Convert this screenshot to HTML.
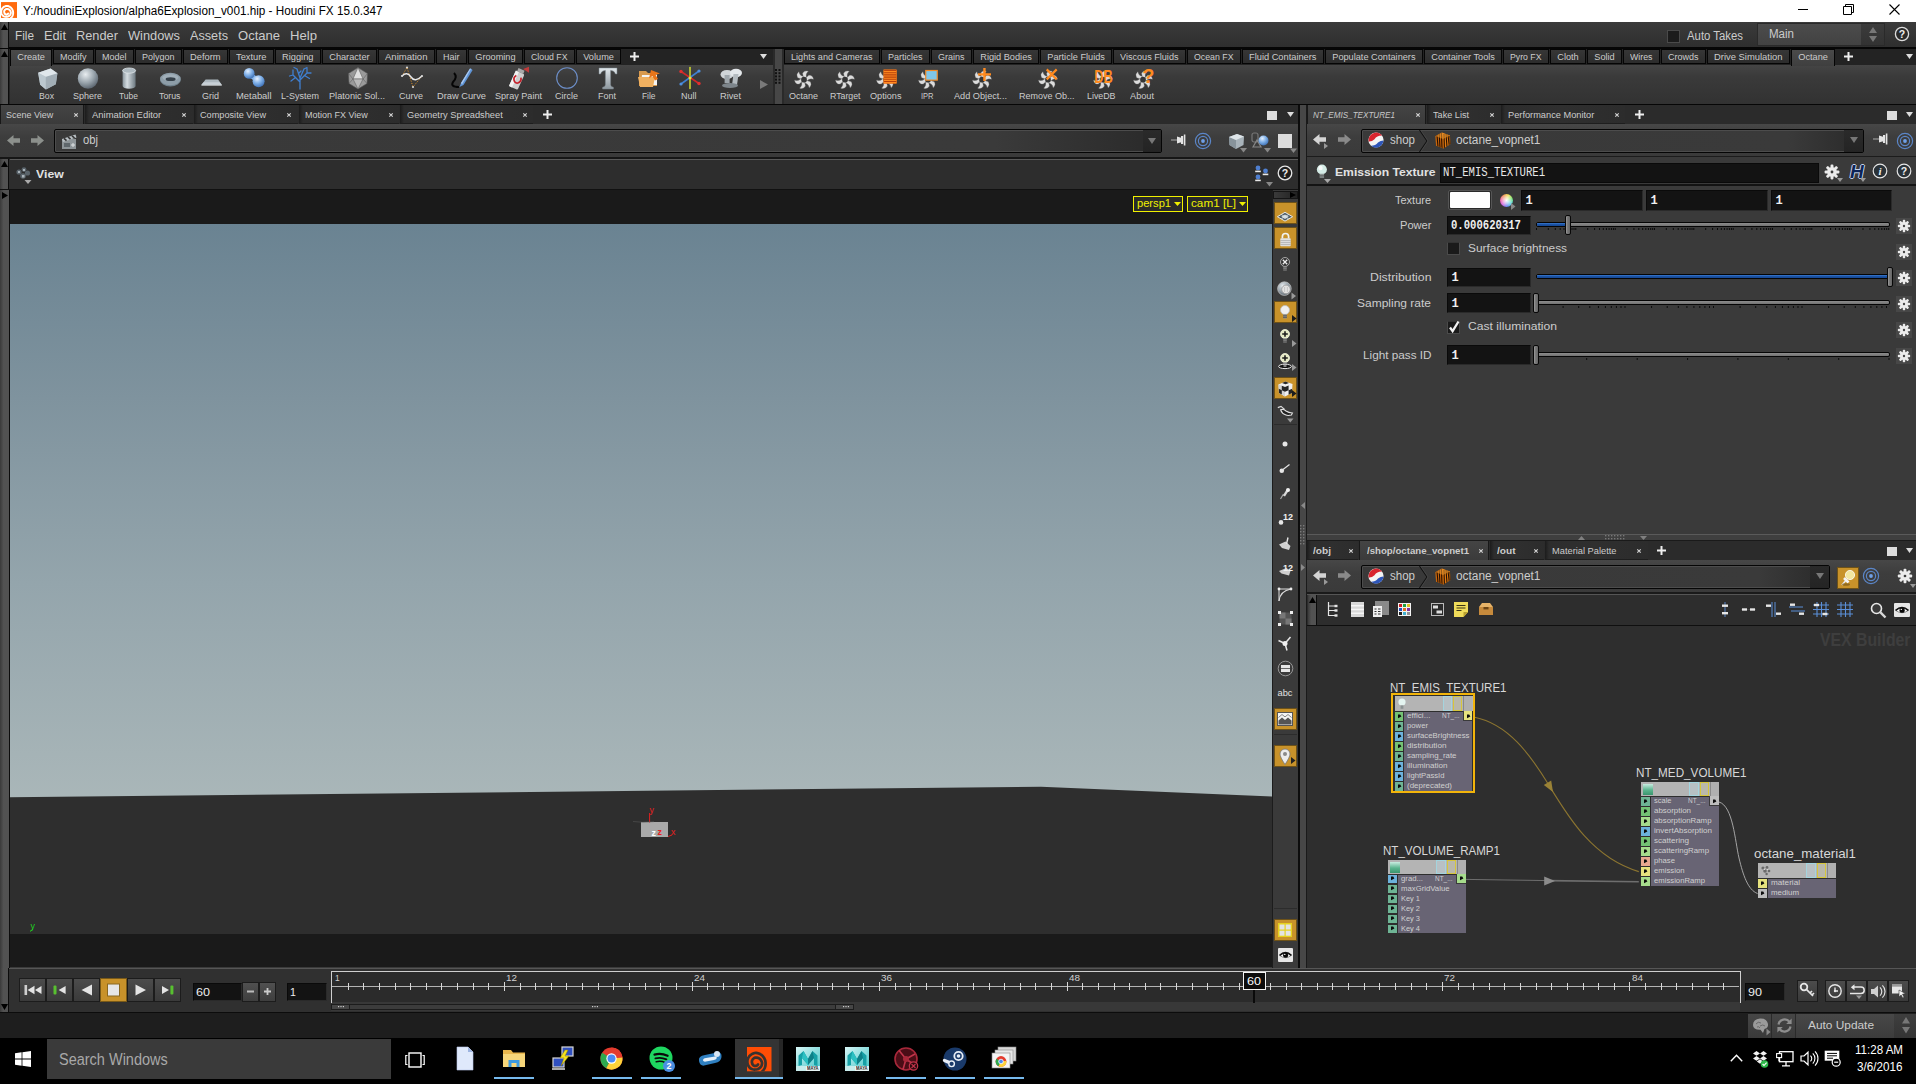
<!DOCTYPE html>
<html><head><meta charset="utf-8"><title>Houdini</title>
<style>
html,body{margin:0;padding:0;background:#3a3a3a;}
body{width:1916px;height:1084px;overflow:hidden;font-family:"Liberation Sans",sans-serif;}
#r{position:relative;width:1916px;height:1084px;overflow:hidden;background:#3a3a3a;}
#r div,#r span,#r svg{position:absolute;box-sizing:border-box;}
#r svg{overflow:visible;}
</style></head><body><div id="r">
<div style="left:0px;top:0px;width:1916px;height:22px;background:#ffffff;"></div>
<svg style="left:1px;top:2px;" width="16" height="16" viewBox="0 0 24.5 24.3"><defs><clipPath id="cpH2"><rect width="24.5" height="24.3"/></clipPath></defs><rect width="24.5" height="24.3" fill="#ff6a0d"/><path clip-path="url(#cpH2)" d="M15.2 24.5L16.3 23.4L17.1 22.1L17.8 20.8L18.3 19.4L18.5 18.0L18.6 16.6L18.5 15.1L18.3 13.7L17.8 12.3L17.2 11.1L16.4 9.9L15.5 8.8L14.4 7.9L13.1 7.1L11.8 6.5L10.4 6.1L9.0 5.9L7.6 6.0L6.2 6.5L5.0 7.0L3.8 7.8L2.8 8.7L2.0 9.7L1.3 10.7L0.8 11.9L0.5 13.0L0.4 14.2L0.4 15.4L0.5 16.5L0.8 17.5L1.2 18.5L1.7 19.4L2.3 20.2L3.0 21.0L3.8 21.5L4.7 22.0L5.6 22.3L6.5 22.5L7.4 22.6L8.3 22.5L9.2 22.5L10.1 22.3L10.9 22.1L11.7 21.7L12.5 21.2L13.2 20.6L13.8 19.9L14.3 19.1L14.7 18.3L14.9 17.4L15.1 16.4L15.0 15.5L14.7 14.6L14.3 13.8L13.8 13.0L13.3 12.3L12.6 11.7L11.9 11.3L11.1 10.9L10.3 10.7L9.5 10.6L8.7 10.6L7.9 10.7L7.2 11.0L6.6 11.5L6.0 11.9L5.6 12.5L5.3 13.1L5.0 13.6L4.9 14.2L4.9 14.8L4.9 15.4L5.1 15.9L5.2 16.3L5.3 16.7L5.4 17.1L5.6 17.5L5.9 17.8L6.1 18.1L6.5 18.4L6.8 18.6L7.2 18.8L7.5 18.9L7.9 18.9L8.3 18.9L8.7 18.9L9.1 18.9L9.4 18.8L9.8 18.6L10.1 18.4L10.5 18.1L10.7 17.8L11.0 17.5" fill="none" stroke="#ffffff" stroke-width="3" stroke-linejoin="round" stroke-linecap="round"/></svg>
<span style="left:22.50px;top:3.80px;font-size:12.3px;line-height:15px;color:#000;white-space:pre;transform-origin:0 50%;transform:scaleX(0.9527);">Y:/houdiniExplosion/alpha6Explosion_v001.hip - Houdini FX 15.0.347</span>
<svg style="left:1797px;top:4px;" width="12" height="12" viewBox="0 0 12 12"><path d="M1 5.5h10" stroke="#000" stroke-width="1"/></svg>
<svg style="left:1843px;top:4px;" width="11" height="11" viewBox="0 0 11 11"><path d="M0.5 2.5h8v8h-8z M2.5 2.5v-2h8v8h-2" fill="none" stroke="#000" stroke-width="1"/></svg>
<svg style="left:1889px;top:4px;" width="11" height="11" viewBox="0 0 11 11"><path d="M0.5 0.5l10 10M10.5 0.5l-10 10" stroke="#000" stroke-width="1.1"/></svg>
<div style="left:0px;top:22px;width:1916px;height:26px;background:linear-gradient(#3b3b3b,#2e2e2e);"></div>
<div style="left:0px;top:47px;width:1916px;height:2px;background:#060606;"></div>
<div style="left:0px;top:22px;width:9px;height:26px;background:linear-gradient(90deg,#3a3a3a,#525252 40%);border-right:1.5px solid #0c0c0c;"></div>
<svg style="left:1px;top:24px;" width="7" height="6" viewBox="0 0 7 6"><path d="M0 6L3.5 0L7 6z" fill="#000"/></svg>
<span style="left:15.00px;top:28.67px;font-size:12.57px;line-height:15px;color:#cccccc;white-space:pre;transform-origin:0 50%;transform:scaleX(0.9386);">File</span>
<span style="left:44.00px;top:28.67px;font-size:12.57px;line-height:15px;color:#cccccc;white-space:pre;transform-origin:0 50%;transform:scaleX(1.0163);">Edit</span>
<span style="left:76.00px;top:28.67px;font-size:12.57px;line-height:15px;color:#cccccc;white-space:pre;transform-origin:0 50%;transform:scaleX(1.0194);">Render</span>
<span style="left:128.00px;top:28.67px;font-size:12.57px;line-height:15px;color:#cccccc;white-space:pre;transform-origin:0 50%;transform:scaleX(1.0204);">Windows</span>
<span style="left:190.00px;top:28.67px;font-size:12.57px;line-height:15px;color:#cccccc;white-space:pre;transform-origin:0 50%;transform:scaleX(1.0080);">Assets</span>
<span style="left:238.00px;top:28.67px;font-size:12.57px;line-height:15px;color:#cccccc;white-space:pre;transform-origin:0 50%;transform:scaleX(1.0370);">Octane</span>
<span style="left:290.00px;top:28.67px;font-size:12.57px;line-height:15px;color:#cccccc;white-space:pre;transform-origin:0 50%;transform:scaleX(1.0450);">Help</span>
<div style="left:1667px;top:30px;width:13px;height:13px;background:#1c1c1c;border:1px solid #4a4a4a;"></div>
<span style="left:1687.00px;top:28.84px;font-size:12.04px;line-height:14px;color:#cccccc;white-space:pre;transform-origin:0 50%;transform:scaleX(0.9443);">Auto Takes</span>
<div style="left:1757px;top:23px;width:128px;height:23px;background:linear-gradient(#4c4c4c,#424242);border:1px solid #2a2a2a;"></div>
<div style="left:1861px;top:24px;width:23px;height:21px;background:linear-gradient(#3c3c3c,#323232);"></div>
<span style="left:1769.00px;top:26.94px;font-size:12.04px;line-height:14px;color:#cccccc;white-space:pre;transform-origin:0 50%;transform:scaleX(0.9587);">Main</span>
<svg style="left:1869px;top:27px;" width="8" height="16" viewBox="0 0 8 16"><path d="M0 6L4 0L8 6z M0 9L4 15L8 9z" fill="#777"/></svg>
<svg style="left:1894px;top:26px;" width="16" height="16" viewBox="0 0 16 16"><circle cx="8" cy="8" r="6.6" fill="#2a2a2a" stroke="#ddd" stroke-width="1.3"/><text x="8" y="12" font-size="10.5" font-weight="bold" fill="#eee" text-anchor="middle" font-family="Liberation Sans">?</text></svg>
<div style="left:0px;top:49px;width:1916px;height:56px;background:#232323;"></div>
<div style="left:0px;top:49px;width:9px;height:55px;background:linear-gradient(90deg,#3a3a3a,#525252 40%);border-right:1.5px solid #0c0c0c;"></div>
<svg style="left:1px;top:51px;" width="7" height="6" viewBox="0 0 7 6"><path d="M0 6L3.5 0L7 6z" fill="#000"/></svg>
<div style="left:10px;top:65px;width:763px;height:39px;background:linear-gradient(#454545,#3a3a3a 30%,#323232);"></div>
<div style="left:784px;top:65px;width:1132px;height:39px;background:linear-gradient(#454545,#3a3a3a 30%,#323232);"></div>
<div style="left:0px;top:104px;width:1916px;height:1.5px;background:#060606;"></div>
<div style="left:773px;top:49px;width:11px;height:55px;background:#2a2a2a;"></div>
<div style="left:775px;top:49px;width:7px;height:55px;background:#474747;"></div>
<div style="left:10px;top:49px;width:42px;height:17px;background:linear-gradient(#4a4a4a,#3f3f3f);border:1px solid #050505;border-bottom:0;"></div>
<span style="left:17.25px;top:52.02px;font-size:9.2px;line-height:11px;color:#cccccc;white-space:pre;">Create</span>
<div style="left:53px;top:49px;width:41px;height:15px;background:linear-gradient(#363636,#2c2c2c);border:1px solid #050505;"></div>
<span style="left:60.25px;top:52.02px;font-size:9.2px;line-height:11px;color:#cccccc;white-space:pre;transform-origin:0 50%;transform:scaleX(0.9793);">Modify</span>
<div style="left:95px;top:49px;width:39px;height:15px;background:linear-gradient(#363636,#2c2c2c);border:1px solid #050505;"></div>
<span style="left:102.25px;top:52.02px;font-size:9.2px;line-height:11px;color:#cccccc;white-space:pre;transform-origin:0 50%;transform:scaleX(0.9791);">Model</span>
<div style="left:135px;top:49px;width:47px;height:15px;background:linear-gradient(#363636,#2c2c2c);border:1px solid #050505;"></div>
<span style="left:142.25px;top:52.02px;font-size:9.2px;line-height:11px;color:#cccccc;white-space:pre;transform-origin:0 50%;transform:scaleX(0.9789);">Polygon</span>
<div style="left:183px;top:49px;width:45px;height:15px;background:linear-gradient(#363636,#2c2c2c);border:1px solid #050505;"></div>
<span style="left:190.25px;top:52.02px;font-size:9.2px;line-height:11px;color:#cccccc;white-space:pre;transform-origin:0 50%;transform:scaleX(1.0126);">Deform</span>
<div style="left:229px;top:49px;width:45px;height:15px;background:linear-gradient(#363636,#2c2c2c);border:1px solid #050505;"></div>
<span style="left:236.25px;top:52.02px;font-size:9.2px;line-height:11px;color:#cccccc;white-space:pre;transform-origin:0 50%;transform:scaleX(1.0123);">Texture</span>
<div style="left:275px;top:49px;width:46px;height:15px;background:linear-gradient(#363636,#2c2c2c);border:1px solid #050505;"></div>
<span style="left:282.25px;top:52.02px;font-size:9.2px;line-height:11px;color:#cccccc;white-space:pre;transform-origin:0 50%;transform:scaleX(1.0110);">Rigging</span>
<div style="left:322px;top:49px;width:55px;height:15px;background:linear-gradient(#363636,#2c2c2c);border:1px solid #050505;"></div>
<span style="left:329.25px;top:52.02px;font-size:9.2px;line-height:11px;color:#cccccc;white-space:pre;">Character</span>
<div style="left:378px;top:49px;width:57px;height:15px;background:linear-gradient(#363636,#2c2c2c);border:1px solid #050505;"></div>
<span style="left:385.25px;top:52.02px;font-size:9.2px;line-height:11px;color:#cccccc;white-space:pre;transform-origin:0 50%;transform:scaleX(1.0403);">Animation</span>
<div style="left:436px;top:49px;width:31px;height:15px;background:linear-gradient(#363636,#2c2c2c);border:1px solid #050505;"></div>
<span style="left:443.25px;top:52.02px;font-size:9.2px;line-height:11px;color:#cccccc;white-space:pre;transform-origin:0 50%;transform:scaleX(0.9795);">Hair</span>
<div style="left:468px;top:49px;width:55px;height:15px;background:linear-gradient(#363636,#2c2c2c);border:1px solid #050505;"></div>
<span style="left:475.25px;top:52.02px;font-size:9.2px;line-height:11px;color:#cccccc;white-space:pre;">Grooming</span>
<div style="left:524px;top:49px;width:51px;height:15px;background:linear-gradient(#363636,#2c2c2c);border:1px solid #050505;"></div>
<span style="left:531.25px;top:52.02px;font-size:9.2px;line-height:11px;color:#cccccc;white-space:pre;transform-origin:0 50%;transform:scaleX(0.9531);">Cloud FX</span>
<div style="left:576px;top:49px;width:45px;height:15px;background:linear-gradient(#363636,#2c2c2c);border:1px solid #050505;"></div>
<span style="left:583.25px;top:52.02px;font-size:9.2px;line-height:11px;color:#cccccc;white-space:pre;">Volume</span>
<div style="left:784px;top:49px;width:96px;height:15px;background:linear-gradient(#363636,#2c2c2c);border:1px solid #050505;"></div>
<span style="left:791.25px;top:52.02px;font-size:9.2px;line-height:11px;color:#cccccc;white-space:pre;transform-origin:0 50%;transform:scaleX(0.9912);">Lights and Cameras</span>
<div style="left:881px;top:49px;width:49px;height:15px;background:linear-gradient(#363636,#2c2c2c);border:1px solid #050505;"></div>
<span style="left:888.25px;top:52.02px;font-size:9.2px;line-height:11px;color:#cccccc;white-space:pre;transform-origin:0 50%;transform:scaleX(0.9793);">Particles</span>
<div style="left:931px;top:49px;width:41px;height:15px;background:linear-gradient(#363636,#2c2c2c);border:1px solid #050505;"></div>
<span style="left:938.25px;top:52.02px;font-size:9.2px;line-height:11px;color:#cccccc;white-space:pre;transform-origin:0 50%;transform:scaleX(0.9793);">Grains</span>
<div style="left:973px;top:49px;width:66px;height:15px;background:linear-gradient(#363636,#2c2c2c);border:1px solid #050505;"></div>
<span style="left:980.25px;top:52.02px;font-size:9.2px;line-height:11px;color:#cccccc;white-space:pre;">Rigid Bodies</span>
<div style="left:1040px;top:49px;width:72px;height:15px;background:linear-gradient(#363636,#2c2c2c);border:1px solid #050505;"></div>
<span style="left:1047.25px;top:52.02px;font-size:9.2px;line-height:11px;color:#cccccc;white-space:pre;">Particle Fluids</span>
<div style="left:1113px;top:49px;width:73px;height:15px;background:linear-gradient(#363636,#2c2c2c);border:1px solid #050505;"></div>
<span style="left:1120.25px;top:52.02px;font-size:9.2px;line-height:11px;color:#cccccc;white-space:pre;transform-origin:0 50%;transform:scaleX(0.9905);">Viscous Fluids</span>
<div style="left:1187px;top:49px;width:54px;height:15px;background:linear-gradient(#363636,#2c2c2c);border:1px solid #050505;"></div>
<span style="left:1194.25px;top:52.02px;font-size:9.2px;line-height:11px;color:#cccccc;white-space:pre;transform-origin:0 50%;transform:scaleX(0.9550);">Ocean FX</span>
<div style="left:1242px;top:49px;width:82px;height:15px;background:linear-gradient(#363636,#2c2c2c);border:1px solid #050505;"></div>
<span style="left:1249.25px;top:52.02px;font-size:9.2px;line-height:11px;color:#cccccc;white-space:pre;transform-origin:0 50%;transform:scaleX(1.0090);">Fluid Containers</span>
<div style="left:1325px;top:49px;width:98px;height:15px;background:linear-gradient(#363636,#2c2c2c);border:1px solid #050505;"></div>
<span style="left:1332.25px;top:52.02px;font-size:9.2px;line-height:11px;color:#cccccc;white-space:pre;">Populate Containers</span>
<div style="left:1424px;top:49px;width:78px;height:15px;background:linear-gradient(#363636,#2c2c2c);border:1px solid #050505;"></div>
<span style="left:1431.25px;top:52.02px;font-size:9.2px;line-height:11px;color:#cccccc;white-space:pre;">Container Tools</span>
<div style="left:1503px;top:49px;width:46px;height:15px;background:linear-gradient(#363636,#2c2c2c);border:1px solid #050505;"></div>
<span style="left:1510.25px;top:52.02px;font-size:9.2px;line-height:11px;color:#cccccc;white-space:pre;transform-origin:0 50%;transform:scaleX(0.9493);">Pyro FX</span>
<div style="left:1550px;top:49px;width:36px;height:15px;background:linear-gradient(#363636,#2c2c2c);border:1px solid #050505;"></div>
<span style="left:1557.25px;top:52.02px;font-size:9.2px;line-height:11px;color:#cccccc;white-space:pre;">Cloth</span>
<div style="left:1587px;top:49px;width:35px;height:15px;background:linear-gradient(#363636,#2c2c2c);border:1px solid #050505;"></div>
<span style="left:1594.25px;top:52.02px;font-size:9.2px;line-height:11px;color:#cccccc;white-space:pre;">Solid</span>
<div style="left:1623px;top:49px;width:37px;height:15px;background:linear-gradient(#363636,#2c2c2c);border:1px solid #050505;"></div>
<span style="left:1630.25px;top:52.02px;font-size:9.2px;line-height:11px;color:#cccccc;white-space:pre;transform-origin:0 50%;transform:scaleX(0.9584);">Wires</span>
<div style="left:1661px;top:49px;width:45px;height:15px;background:linear-gradient(#363636,#2c2c2c);border:1px solid #050505;"></div>
<span style="left:1668.25px;top:52.02px;font-size:9.2px;line-height:11px;color:#cccccc;white-space:pre;transform-origin:0 50%;transform:scaleX(0.9794);">Crowds</span>
<div style="left:1707px;top:49px;width:83px;height:15px;background:linear-gradient(#363636,#2c2c2c);border:1px solid #050505;"></div>
<span style="left:1714.25px;top:52.02px;font-size:9.2px;line-height:11px;color:#cccccc;white-space:pre;transform-origin:0 50%;transform:scaleX(1.0241);">Drive Simulation</span>
<div style="left:1791px;top:49px;width:44px;height:17px;background:linear-gradient(#4a4a4a,#3f3f3f);border:1px solid #050505;border-bottom:0;"></div>
<span style="left:1798.25px;top:52.02px;font-size:9.2px;line-height:11px;color:#cccccc;white-space:pre;">Octane</span>
<svg style="left:630px;top:52px;" width="9" height="9" viewBox="0 0 9 9"><path d="M4.5 0v9M0 4.5h9" stroke="#eee" stroke-width="2"/></svg>
<svg style="left:1844px;top:52px;" width="9" height="9" viewBox="0 0 9 9"><path d="M4.5 0v9M0 4.5h9" stroke="#eee" stroke-width="2"/></svg>
<svg style="left:760px;top:54px;" width="7" height="5" viewBox="0 0 7 5"><path d="M0 0h7L3.5 5z" fill="#ddd"/></svg>
<svg style="left:1906px;top:54px;" width="7" height="5" viewBox="0 0 7 5"><path d="M0 0h7L3.5 5z" fill="#ddd"/></svg>
<svg style="left:0;top:0" width="0" height="0"><defs><radialGradient id="gSph" cx="38%" cy="30%" r="75%"><stop offset="0" stop-color="#e8edf0"/><stop offset="0.55" stop-color="#9aa5ad"/><stop offset="1" stop-color="#56606a"/></radialGradient><radialGradient id="gBlu" cx="38%" cy="30%" r="75%"><stop offset="0" stop-color="#e4f0ff"/><stop offset="0.5" stop-color="#7fb0e8"/><stop offset="1" stop-color="#3a6db3"/></radialGradient><linearGradient id="gCyl" x1="0" x2="1"><stop offset="0" stop-color="#8a969e"/><stop offset="0.35" stop-color="#d5dde2"/><stop offset="1" stop-color="#6c7880"/></linearGradient><linearGradient id="gT" x1="0" x2="0" y1="0" y2="1"><stop offset="0" stop-color="#e2e8ec"/><stop offset="1" stop-color="#8d979e"/></linearGradient><radialGradient id="gWheel" cx="50%" cy="50%" r="50%"><stop offset="0" stop-color="#ffffff"/><stop offset="0.35" stop-color="#f6e27a"/><stop offset="0.55" stop-color="#7ee08a"/><stop offset="0.75" stop-color="#6fa0ff"/><stop offset="1" stop-color="#e060d0"/></radialGradient></defs></svg>
<svg style="left:34.8px;top:66.2px;" width="24" height="24" viewBox="0 0 24 24"><path d="M3.1 6.700L15.600 2.500L22.400 7.200L20.800 18.200L10.900 23.400L5.200 18.700Z" fill="#aab6bd"/><path d="M3.100 6.700L10.900 10.800L10.900 23.400L5.200 18.700Z" fill="#bcc8cf"/><path d="M10.900 10.800L22.400 7.200L20.800 18.200L10.900 23.400Z" fill="#a2aeb6"/><path d="M3.100 6.700L15.600 2.500L22.400 7.200L10.900 10.800Z" fill="#e0e7eb"/></svg>
<span style="left:39.00px;top:91.12px;font-size:9.29px;line-height:11px;color:#cccccc;white-space:pre;transform-origin:0 50%;transform:scaleX(0.9379);">Box</span>
<svg style="left:75.5px;top:66.2px;" width="24" height="24" viewBox="0 0 24 24"><circle cx="12" cy="12.5" r="10.2" fill="url(#gSph)"/></svg>
<span style="left:73.00px;top:91.12px;font-size:9.29px;line-height:11px;color:#cccccc;white-space:pre;transform-origin:0 50%;transform:scaleX(0.9690);">Sphere</span>
<svg style="left:116.8px;top:66.2px;" width="24" height="24" viewBox="0 0 24 24"><path d="M5.600 4.600v15.400a6.500 2.700 0 0 0 13 0V4.600z" fill="url(#gCyl)"/><ellipse cx="12.100" cy="4.600" rx="6.500" ry="2.600" fill="#aebac1" stroke="#dfe6ea" stroke-width="0.800"/></svg>
<span style="left:119.00px;top:91.12px;font-size:9.29px;line-height:11px;color:#cccccc;white-space:pre;transform-origin:0 50%;transform:scaleX(0.9130);">Tube</span>
<svg style="left:158px;top:66.2px;" width="24" height="24" viewBox="0 0 24 24"><ellipse cx="12.400" cy="13.900" rx="10.400" ry="6.500" fill="#6f808b"/><ellipse cx="12.400" cy="13" rx="10.300" ry="6.200" fill="#8d9da8"/><ellipse cx="12.400" cy="11.600" rx="8" ry="3.400" fill="#a9b7c0" opacity="0.700"/><ellipse cx="12.600" cy="13.200" rx="5" ry="1.900" fill="#36414a"/></svg>
<span style="left:159.00px;top:91.12px;font-size:9.29px;line-height:11px;color:#cccccc;white-space:pre;transform-origin:0 50%;transform:scaleX(0.9473);">Torus</span>
<svg style="left:198.8px;top:66.2px;" width="24" height="24" viewBox="0 0 24 24"><path d="M6.600 13.500h12.500l3.700 5.200H2.400z" fill="#aeb9c0"/><path d="M4.600 16.200h15.800l2.400 2.500H2.400z" fill="#c8d1d7"/><path d="M2.400 18.700h20.400v0.900H2.400z" fill="#e8ecee"/></svg>
<span style="left:202.00px;top:91.12px;font-size:9.29px;line-height:11px;color:#cccccc;white-space:pre;transform-origin:0 50%;transform:scaleX(0.9695);">Grid</span>
<svg style="left:242px;top:66.2px;" width="24" height="24" viewBox="0 0 24 24"><path d="M6 9Q12 10 15 15" stroke="#7fb0e8" stroke-width="5" fill="none"/><circle cx="7.2" cy="7.4" r="5.4" fill="url(#gBlu)"/><circle cx="16.6" cy="15.2" r="6" fill="url(#gBlu)"/></svg>
<span style="left:236.00px;top:91.12px;font-size:9.29px;line-height:11px;color:#cccccc;white-space:pre;transform-origin:0 50%;transform:scaleX(1.0119);">Metaball</span>
<svg style="left:288px;top:66.2px;" width="24" height="24" viewBox="0 0 24 24"><g stroke="#3f7fd0" stroke-width="1.3" fill="none" stroke-linecap="round"><path d="M12 23V12M12 16L5 9M12 14l7-7M12 12L9 3M12 12l4-9M5 9L1.5 10M5 9V4M7.5 11.5L3 15M19 7h4M19 7V2.5M16.5 9.5l5 3M9 3L6 1.5M16 3l3-1.5M10.5 7.5L13 5"/></g></svg>
<span style="left:281.00px;top:91.12px;font-size:9.29px;line-height:11px;color:#cccccc;white-space:pre;transform-origin:0 50%;transform:scaleX(0.9695);">L-System</span>
<svg style="left:346px;top:66.2px;" width="24" height="24" viewBox="0 0 24 24"><path d="M12 1.5L21.5 7.5L21 17.5L12 23L3 17.5L2.5 7.5Z" fill="#9a9a9a" stroke="#555" stroke-width="0.6"/><path d="M12 1.5L7 13L17 13Z" fill="#e0e0e0" stroke="#555" stroke-width="0.5"/><path d="M7 13L12 23L17 13Z" fill="#b8b8b8" stroke="#555" stroke-width="0.5"/><path d="M2.5 7.5L7 13L3 17.5M21.5 7.5L17 13L21 17.5" fill="none" stroke="#555" stroke-width="0.5"/></svg>
<span style="left:329.00px;top:91.12px;font-size:9.29px;line-height:11px;color:#cccccc;white-space:pre;transform-origin:0 50%;transform:scaleX(0.9868);">Platonic Sol...</span>
<svg style="left:400px;top:66.2px;" width="24" height="24" viewBox="0 0 24 24"><path d="M2 10L7 1.5L13 21L22 10" fill="none" stroke="#d8902a" stroke-width="1" stroke-dasharray="1.2 1.4"/><path d="M2 10Q7 5 11 11T22 10" fill="none" stroke="#e8e8e8" stroke-width="1.5"/><g fill="#d8d8d8"><circle cx="2" cy="10" r="1.1"/><circle cx="7" cy="1.5" r="1.1"/><circle cx="13" cy="21" r="1.1"/><circle cx="22" cy="10" r="1.1"/></g></svg>
<span style="left:399.00px;top:91.12px;font-size:9.29px;line-height:11px;color:#cccccc;white-space:pre;transform-origin:0 50%;transform:scaleX(0.9694);">Curve</span>
<svg style="left:449px;top:66.2px;" width="24" height="24" viewBox="0 0 24 24"><path d="M5 7Q9 11 4 16Q1 21 10 21" fill="none" stroke="#050505" stroke-width="2"/><path d="M10.5 21L12 17L21 2.5Q23 2.2 23.5 4.2L14.5 19Z" fill="#5f94d6"/><path d="M12 17L21 2.5l1 .4L13 18.5Z" fill="#a9c8f0"/></svg>
<span style="left:437.00px;top:91.12px;font-size:9.29px;line-height:11px;color:#cccccc;white-space:pre;">Draw Curve</span>
<svg style="left:505.8px;top:66.2px;" width="24" height="24" viewBox="0 0 24 24"><g transform="rotate(24 12 12)"><rect x="7" y="6" width="9.5" height="17" rx="1.5" fill="#cfcfcf"/><rect x="7" y="6" width="3.4" height="17" fill="#f2f2f2"/><rect x="8.4" y="2.6" width="6.6" height="3.6" fill="#a9a9a9"/><path d="M9.5 10.5a3.4 4 0 1 0 5 0" fill="none" stroke="#c5202a" stroke-width="1.7"/></g><path d="M17 3l6-2.2v6z" fill="#e03a3a" opacity="0.8"/></svg>
<span style="left:495.00px;top:91.12px;font-size:9.29px;line-height:11px;color:#cccccc;white-space:pre;transform-origin:0 50%;transform:scaleX(0.9796);">Spray Paint</span>
<svg style="left:555px;top:66.2px;" width="24" height="24" viewBox="0 0 24 24"><circle cx="12" cy="12" r="10.3" fill="none" stroke="#6d8fc9" stroke-width="1.1"/></svg>
<span style="left:555.00px;top:91.12px;font-size:9.29px;line-height:11px;color:#cccccc;white-space:pre;transform-origin:0 50%;transform:scaleX(0.9696);">Circle</span>
<svg style="left:596px;top:66.2px;" width="24" height="24" viewBox="0 0 24 24"><path d="M3 2h18v6h-1.6Q18.6 4.6 14.6 4.4V19Q14.8 21 17.4 21.3V23H6.6v-1.7Q9.2 21 9.4 19V4.4Q5.4 4.6 4.6 8H3Z" fill="url(#gT)" stroke="#7b858c" stroke-width="0.5"/></svg>
<span style="left:598.00px;top:91.12px;font-size:9.29px;line-height:11px;color:#cccccc;white-space:pre;transform-origin:0 50%;transform:scaleX(0.9692);">Font</span>
<svg style="left:637px;top:66.2px;" width="24" height="24" viewBox="0 0 24 24"><path d="M2 5h7l2 2h9v13H2z" fill="#d99a4e"/><path d="M5 9h15v10H4z" fill="#f4f4f4"/><path d="M1 11h17l-2 10H3z" fill="#f0b060"/><path d="M14 4l9 3.5-4.5 1.2L21 13l-3 1.4-2.6-4.4-3.4 2.6z" fill="#e8751a"/></svg>
<span style="left:642.00px;top:91.12px;font-size:9.29px;line-height:11px;color:#cccccc;white-space:pre;transform-origin:0 50%;transform:scaleX(0.9027);">File</span>
<svg style="left:678px;top:66.2px;" width="24" height="24" viewBox="0 0 24 24"><g stroke-width="1.6" stroke-linecap="round"><path d="M12 1.5v21" stroke="#c9d430"/><path d="M3 5.5l18 12" stroke="#d02828"/><path d="M21 5l-18 13" stroke="#3f7fd0"/></g><circle cx="3" cy="5.5" r="1.7" fill="#e03030"/><circle cx="21" cy="17.5" r="1.7" fill="#e03030"/><circle cx="21" cy="5" r="1.6" fill="#4f8fe0"/><circle cx="3" cy="18" r="1.6" fill="#4f8fe0"/><circle cx="12" cy="11.8" r="1.5" fill="#f0e040"/></svg>
<span style="left:681.00px;top:91.12px;font-size:9.29px;line-height:11px;color:#cccccc;white-space:pre;transform-origin:0 50%;transform:scaleX(0.9694);">Null</span>
<svg style="left:719px;top:66.2px;" width="24" height="24" viewBox="0 0 24 24"><ellipse cx="8" cy="8.5" rx="6.5" ry="4.6" fill="#cfd4d8"/><rect x="5.6" y="9" width="5" height="8" fill="#9da5ab"/><ellipse cx="17" cy="7" rx="6" ry="4.2" fill="#e4e8eb"/><path d="M14.5 8h5l-1.5 11h-5z" fill="#b4bbc0"/><ellipse cx="11" cy="19.5" rx="8" ry="2.6" fill="#7d858b"/></svg>
<span style="left:720.00px;top:91.12px;font-size:9.29px;line-height:11px;color:#cccccc;white-space:pre;transform-origin:0 50%;transform:scaleX(0.9931);">Rivet</span>
<svg style="left:792px;top:66.2px;" width="24" height="24" viewBox="0 0 24 24"><g transform="translate(12 13.7) scale(0.86) translate(-12 -12)"><g fill="#dcdcdc" stroke="#8c8c8c" stroke-width="0.35"><g transform="rotate(0 12 12)"><path d="M12 12 L10.4 4.6 Q12.4 0.6 17 2.2 Q13.4 5 14.8 9.6 Z"/></g><g transform="rotate(60 12 12)"><path d="M12 12 L10.4 4.6 Q12.4 0.6 17 2.2 Q13.4 5 14.8 9.6 Z"/></g><g transform="rotate(120 12 12)"><path d="M12 12 L10.4 4.6 Q12.4 0.6 17 2.2 Q13.4 5 14.8 9.6 Z"/></g><g transform="rotate(180 12 12)"><path d="M12 12 L10.4 4.6 Q12.4 0.6 17 2.2 Q13.4 5 14.8 9.6 Z"/></g><g transform="rotate(240 12 12)"><path d="M12 12 L10.4 4.6 Q12.4 0.6 17 2.2 Q13.4 5 14.8 9.6 Z"/></g><g transform="rotate(300 12 12)"><path d="M12 12 L10.4 4.6 Q12.4 0.6 17 2.2 Q13.4 5 14.8 9.6 Z"/></g></g><circle cx="12" cy="12" r="3.3" fill="#353535"/></g></svg>
<span style="left:789.00px;top:91.12px;font-size:9.29px;line-height:11px;color:#cccccc;white-space:pre;transform-origin:0 50%;transform:scaleX(0.9691);">Octane</span>
<svg style="left:832.5px;top:66.2px;" width="24" height="24" viewBox="0 0 24 24"><g transform="translate(12 13.7) scale(0.86) translate(-12 -12)"><g fill="#dcdcdc" stroke="#8c8c8c" stroke-width="0.35"><g transform="rotate(0 12 12)"><path d="M12 12 L10.4 4.6 Q12.4 0.6 17 2.2 Q13.4 5 14.8 9.6 Z"/></g><g transform="rotate(60 12 12)"><path d="M12 12 L10.4 4.6 Q12.4 0.6 17 2.2 Q13.4 5 14.8 9.6 Z"/></g><g transform="rotate(120 12 12)"><path d="M12 12 L10.4 4.6 Q12.4 0.6 17 2.2 Q13.4 5 14.8 9.6 Z"/></g><g transform="rotate(180 12 12)"><path d="M12 12 L10.4 4.6 Q12.4 0.6 17 2.2 Q13.4 5 14.8 9.6 Z"/></g><g transform="rotate(240 12 12)"><path d="M12 12 L10.4 4.6 Q12.4 0.6 17 2.2 Q13.4 5 14.8 9.6 Z"/></g><g transform="rotate(300 12 12)"><path d="M12 12 L10.4 4.6 Q12.4 0.6 17 2.2 Q13.4 5 14.8 9.6 Z"/></g></g><circle cx="12" cy="12" r="3.3" fill="#353535"/></g></svg>
<span style="left:829.50px;top:91.12px;font-size:9.29px;line-height:11px;color:#cccccc;white-space:pre;transform-origin:0 50%;transform:scaleX(0.9434);">RTarget</span>
<svg style="left:874px;top:66.2px;" width="24" height="24" viewBox="0 0 24 24"><g transform="translate(12 13.7) scale(0.86) translate(-12 -12)"><g fill="#dcdcdc" stroke="#8c8c8c" stroke-width="0.35"><g transform="rotate(0 12 12)"><path d="M12 12 L10.4 4.6 Q12.4 0.6 17 2.2 Q13.4 5 14.8 9.6 Z"/></g><g transform="rotate(60 12 12)"><path d="M12 12 L10.4 4.6 Q12.4 0.6 17 2.2 Q13.4 5 14.8 9.6 Z"/></g><g transform="rotate(120 12 12)"><path d="M12 12 L10.4 4.6 Q12.4 0.6 17 2.2 Q13.4 5 14.8 9.6 Z"/></g><g transform="rotate(180 12 12)"><path d="M12 12 L10.4 4.6 Q12.4 0.6 17 2.2 Q13.4 5 14.8 9.6 Z"/></g><g transform="rotate(240 12 12)"><path d="M12 12 L10.4 4.6 Q12.4 0.6 17 2.2 Q13.4 5 14.8 9.6 Z"/></g><g transform="rotate(300 12 12)"><path d="M12 12 L10.4 4.6 Q12.4 0.6 17 2.2 Q13.4 5 14.8 9.6 Z"/></g></g><circle cx="12" cy="12" r="3.3" fill="#353535"/></g><rect x="9.8" y="3.8" width="12.6" height="13.7" fill="#b8400c"/><path d="M9.8 5.6h12.6M9.8 7.800h12.6M9.8 10h12.6M9.8 12.200h12.6M9.8 14.400h12.6M9.8 16.500h12.600" stroke="#ff8a1f" stroke-width="1.100"/><rect x="9.8" y="3.8" width="12.6" height="13.7" fill="none" stroke="#ff7f19" stroke-width="0.600"/></svg>
<span style="left:870.00px;top:91.12px;font-size:9.29px;line-height:11px;color:#cccccc;white-space:pre;transform-origin:0 50%;transform:scaleX(0.9848);">Options</span>
<svg style="left:915.8px;top:66.2px;" width="24" height="24" viewBox="0 0 24 24"><g transform="translate(12 13.7) scale(0.86) translate(-12 -12)"><g fill="#dcdcdc" stroke="#8c8c8c" stroke-width="0.35"><g transform="rotate(0 12 12)"><path d="M12 12 L10.4 4.6 Q12.4 0.6 17 2.2 Q13.4 5 14.8 9.6 Z"/></g><g transform="rotate(60 12 12)"><path d="M12 12 L10.4 4.6 Q12.4 0.6 17 2.2 Q13.4 5 14.8 9.6 Z"/></g><g transform="rotate(120 12 12)"><path d="M12 12 L10.4 4.6 Q12.4 0.6 17 2.2 Q13.4 5 14.8 9.6 Z"/></g><g transform="rotate(180 12 12)"><path d="M12 12 L10.4 4.6 Q12.4 0.6 17 2.2 Q13.4 5 14.8 9.6 Z"/></g><g transform="rotate(240 12 12)"><path d="M12 12 L10.4 4.6 Q12.4 0.6 17 2.2 Q13.4 5 14.8 9.6 Z"/></g><g transform="rotate(300 12 12)"><path d="M12 12 L10.4 4.6 Q12.4 0.6 17 2.2 Q13.4 5 14.8 9.6 Z"/></g></g><circle cx="12" cy="12" r="3.3" fill="#353535"/></g><rect x="9.75" y="4.500" width="11.500" height="9.600" fill="#7fc6e8" stroke="#f08a28" stroke-width="1.200"/></svg>
<span style="left:920.50px;top:91.12px;font-size:9.29px;line-height:11px;color:#cccccc;white-space:pre;transform-origin:0 50%;transform:scaleX(0.8079);">IPR</span>
<svg style="left:969.8px;top:66.2px;" width="24" height="24" viewBox="0 0 24 24"><g transform="translate(12 13.7) scale(0.86) translate(-12 -12)"><g fill="#dcdcdc" stroke="#8c8c8c" stroke-width="0.35"><g transform="rotate(0 12 12)"><path d="M12 12 L10.4 4.6 Q12.4 0.6 17 2.2 Q13.4 5 14.8 9.6 Z"/></g><g transform="rotate(60 12 12)"><path d="M12 12 L10.4 4.6 Q12.4 0.6 17 2.2 Q13.4 5 14.8 9.6 Z"/></g><g transform="rotate(120 12 12)"><path d="M12 12 L10.4 4.6 Q12.4 0.6 17 2.2 Q13.4 5 14.8 9.6 Z"/></g><g transform="rotate(180 12 12)"><path d="M12 12 L10.4 4.6 Q12.4 0.6 17 2.2 Q13.4 5 14.8 9.6 Z"/></g><g transform="rotate(240 12 12)"><path d="M12 12 L10.4 4.6 Q12.4 0.6 17 2.2 Q13.4 5 14.8 9.6 Z"/></g><g transform="rotate(300 12 12)"><path d="M12 12 L10.4 4.6 Q12.4 0.6 17 2.2 Q13.4 5 14.8 9.6 Z"/></g></g><circle cx="12" cy="12" r="3.3" fill="#353535"/></g><path d="M14.450 2v13M8 8.400h13" stroke="#ff8a1f" stroke-width="2.400"/></svg>
<span style="left:954.00px;top:91.12px;font-size:9.29px;line-height:11px;color:#cccccc;white-space:pre;transform-origin:0 50%;transform:scaleX(0.9878);">Add Object...</span>
<svg style="left:1036px;top:66.2px;" width="24" height="24" viewBox="0 0 24 24"><g transform="translate(12 13.7) scale(0.86) translate(-12 -12)"><g fill="#dcdcdc" stroke="#8c8c8c" stroke-width="0.35"><g transform="rotate(0 12 12)"><path d="M12 12 L10.4 4.6 Q12.4 0.6 17 2.2 Q13.4 5 14.8 9.6 Z"/></g><g transform="rotate(60 12 12)"><path d="M12 12 L10.4 4.6 Q12.4 0.6 17 2.2 Q13.4 5 14.8 9.6 Z"/></g><g transform="rotate(120 12 12)"><path d="M12 12 L10.4 4.6 Q12.4 0.6 17 2.2 Q13.4 5 14.8 9.6 Z"/></g><g transform="rotate(180 12 12)"><path d="M12 12 L10.4 4.6 Q12.4 0.6 17 2.2 Q13.4 5 14.8 9.6 Z"/></g><g transform="rotate(240 12 12)"><path d="M12 12 L10.4 4.6 Q12.4 0.6 17 2.2 Q13.4 5 14.8 9.6 Z"/></g><g transform="rotate(300 12 12)"><path d="M12 12 L10.4 4.6 Q12.4 0.6 17 2.2 Q13.4 5 14.8 9.6 Z"/></g></g><circle cx="12" cy="12" r="3.3" fill="#353535"/></g><path d="M10.700 3.400l10 10M20.700 3.400l-10 10" stroke="#ff8a1f" stroke-width="2.200"/></svg>
<span style="left:1019.00px;top:91.12px;font-size:9.29px;line-height:11px;color:#cccccc;white-space:pre;transform-origin:0 50%;transform:scaleX(0.9693);">Remove Ob...</span>
<svg style="left:1091px;top:66.2px;" width="24" height="24" viewBox="0 0 24 24"><g transform="translate(12 13.7) scale(0.86) translate(-12 -12)"><g fill="#dcdcdc" stroke="#8c8c8c" stroke-width="0.35"><g transform="rotate(0 12 12)"><path d="M12 12 L10.4 4.6 Q12.4 0.6 17 2.2 Q13.4 5 14.8 9.6 Z"/></g><g transform="rotate(60 12 12)"><path d="M12 12 L10.4 4.6 Q12.4 0.6 17 2.2 Q13.4 5 14.8 9.6 Z"/></g><g transform="rotate(120 12 12)"><path d="M12 12 L10.4 4.6 Q12.4 0.6 17 2.2 Q13.4 5 14.8 9.6 Z"/></g><g transform="rotate(180 12 12)"><path d="M12 12 L10.4 4.6 Q12.4 0.6 17 2.2 Q13.4 5 14.8 9.6 Z"/></g><g transform="rotate(240 12 12)"><path d="M12 12 L10.4 4.6 Q12.4 0.6 17 2.2 Q13.4 5 14.8 9.6 Z"/></g><g transform="rotate(300 12 12)"><path d="M12 12 L10.4 4.6 Q12.4 0.6 17 2.2 Q13.4 5 14.8 9.6 Z"/></g></g><circle cx="12" cy="12" r="3.3" fill="#353535"/></g><text x="12.600" y="17" font-size="19" font-weight="bold" fill="#ff8a1f" text-anchor="middle" font-family="Liberation Sans" textLength="18.500" lengthAdjust="spacingAndGlyphs">DB</text></svg>
<span style="left:1087.00px;top:91.12px;font-size:9.29px;line-height:11px;color:#cccccc;white-space:pre;transform-origin:0 50%;transform:scaleX(0.9526);">LiveDB</span>
<svg style="left:1131px;top:66.2px;" width="24" height="24" viewBox="0 0 24 24"><g transform="translate(12 13.7) scale(0.86) translate(-12 -12)"><g fill="#dcdcdc" stroke="#8c8c8c" stroke-width="0.35"><g transform="rotate(0 12 12)"><path d="M12 12 L10.4 4.6 Q12.4 0.6 17 2.2 Q13.4 5 14.8 9.6 Z"/></g><g transform="rotate(60 12 12)"><path d="M12 12 L10.4 4.6 Q12.4 0.6 17 2.2 Q13.4 5 14.8 9.6 Z"/></g><g transform="rotate(120 12 12)"><path d="M12 12 L10.4 4.6 Q12.4 0.6 17 2.2 Q13.4 5 14.8 9.6 Z"/></g><g transform="rotate(180 12 12)"><path d="M12 12 L10.4 4.6 Q12.4 0.6 17 2.2 Q13.4 5 14.8 9.6 Z"/></g><g transform="rotate(240 12 12)"><path d="M12 12 L10.4 4.6 Q12.4 0.6 17 2.2 Q13.4 5 14.8 9.6 Z"/></g><g transform="rotate(300 12 12)"><path d="M12 12 L10.4 4.6 Q12.4 0.6 17 2.2 Q13.4 5 14.8 9.6 Z"/></g></g><circle cx="12" cy="12" r="3.3" fill="#353535"/></g><text x="17.400" y="17" font-size="19.500" font-weight="bold" fill="#ff8a1f" text-anchor="middle" font-family="Liberation Sans">?</text></svg>
<span style="left:1130.00px;top:91.12px;font-size:9.29px;line-height:11px;color:#cccccc;white-space:pre;transform-origin:0 50%;transform:scaleX(0.9895);">About</span>
<svg style="left:760px;top:80px;" width="8" height="9" viewBox="0 0 8 9"><path d="M0 0L8 4.5L0 9z" fill="#7a7a7a"/></svg>
<svg style="left:775px;top:69px;" width="6" height="15" viewBox="0 0 6 15"><rect x="0" y="0" width="2" height="2" fill="#111"/><rect x="0" y="3.2" width="2" height="2" fill="#111"/><rect x="0" y="6.4" width="2" height="2" fill="#111"/><rect x="0" y="9.6" width="2" height="2" fill="#111"/><rect x="0" y="12.8" width="2" height="2" fill="#111"/><rect x="3.5" y="0" width="2" height="2" fill="#111"/><rect x="3.5" y="3.2" width="2" height="2" fill="#111"/><rect x="3.5" y="6.4" width="2" height="2" fill="#111"/><rect x="3.5" y="9.6" width="2" height="2" fill="#111"/><rect x="3.5" y="12.8" width="2" height="2" fill="#111"/></svg>
<div style="left:0px;top:105px;width:1298px;height:53px;background:#3a3a3a;"></div>
<div style="left:0px;top:105px;width:1298px;height:19px;background:#2b2b2b;"></div>
<div style="left:0px;top:105px;width:84px;height:20px;background:linear-gradient(#444,#3a3a3a);border-right:1px solid #181818;border-left:1px solid #181818;"></div>
<span style="left:6.00px;top:108.94px;font-size:9.73px;line-height:12px;color:#cccccc;white-space:pre;transform-origin:0 50%;transform:scaleX(0.9238);">Scene View</span>
<svg style="left:73.75px;top:113px;" width="4" height="4" viewBox="0 0 4 4"><path d="M0.3 0.3l3.4 3.4M3.7 0.3l-3.4 3.4" stroke="#d8d8d8" stroke-width="1.05"/></svg>
<div style="left:85px;top:105px;width:108px;height:18.5px;background:linear-gradient(90deg,#1c1c1c,#2d2d2d 4px,#2f2f2f 50%,#2c2c2c);border-bottom:1px solid #1e1e1e;"></div>
<span style="left:92.00px;top:108.94px;font-size:9.73px;line-height:12px;color:#cccccc;white-space:pre;transform-origin:0 50%;transform:scaleX(0.9712);">Animation Editor</span>
<svg style="left:181.75px;top:113px;" width="4" height="4" viewBox="0 0 4 4"><path d="M0.3 0.3l3.4 3.4M3.7 0.3l-3.4 3.4" stroke="#d8d8d8" stroke-width="1.05"/></svg>
<div style="left:194px;top:105px;width:104px;height:18.5px;background:linear-gradient(90deg,#1c1c1c,#2d2d2d 4px,#2f2f2f 50%,#2c2c2c);border-bottom:1px solid #1e1e1e;"></div>
<span style="left:200.00px;top:108.94px;font-size:9.73px;line-height:12px;color:#cccccc;white-space:pre;transform-origin:0 50%;transform:scaleX(0.9423);">Composite View</span>
<svg style="left:286.75px;top:113px;" width="4" height="4" viewBox="0 0 4 4"><path d="M0.3 0.3l3.4 3.4M3.7 0.3l-3.4 3.4" stroke="#d8d8d8" stroke-width="1.05"/></svg>
<div style="left:299px;top:105px;width:100px;height:18.5px;background:linear-gradient(90deg,#1c1c1c,#2d2d2d 4px,#2f2f2f 50%,#2c2c2c);border-bottom:1px solid #1e1e1e;"></div>
<span style="left:305.25px;top:108.94px;font-size:9.73px;line-height:12px;color:#cccccc;white-space:pre;transform-origin:0 50%;transform:scaleX(0.9244);">Motion FX View</span>
<svg style="left:388.75px;top:113px;" width="4" height="4" viewBox="0 0 4 4"><path d="M0.3 0.3l3.4 3.4M3.7 0.3l-3.4 3.4" stroke="#d8d8d8" stroke-width="1.05"/></svg>
<div style="left:400px;top:105px;width:133px;height:18.5px;background:linear-gradient(90deg,#1c1c1c,#2d2d2d 4px,#2f2f2f 50%,#2c2c2c);border-bottom:1px solid #1e1e1e;"></div>
<span style="left:407.00px;top:108.94px;font-size:9.73px;line-height:12px;color:#cccccc;white-space:pre;transform-origin:0 50%;transform:scaleX(0.9529);">Geometry Spreadsheet</span>
<svg style="left:522.75px;top:113px;" width="4" height="4" viewBox="0 0 4 4"><path d="M0.3 0.3l3.4 3.4M3.7 0.3l-3.4 3.4" stroke="#d8d8d8" stroke-width="1.05"/></svg>
<svg style="left:543.25px;top:110px;" width="9" height="9" viewBox="0 0 9 9"><path d="M4.5 0v9M0 4.5h9" stroke="#eee" stroke-width="2"/></svg>
<svg style="left:1267px;top:110.5px;" width="10" height="9" viewBox="0 0 10 9"><rect x="0" y="0" width="10" height="9" fill="#ddd"/></svg>
<svg style="left:1286.5px;top:112px;" width="7" height="5" viewBox="0 0 7 5"><path d="M0 0h7L3.5 5z" fill="#ddd"/></svg>
<div style="left:0px;top:124px;width:1298px;height:33px;background:linear-gradient(#474747,#3d3d3d 40%,#3a3a3a);"></div>
<svg style="left:7px;top:135px;" width="13" height="11" viewBox="0 0 13 11"><path d="M0 5.5L6.5 0v3.2H13v4.6H6.5V11z" fill="#8c908c"/></svg>
<svg style="left:31px;top:135px;" width="13" height="11" viewBox="0 0 13 11"><path d="M13 5.5L6.5 0v3.2H0v4.6h6.5V11z" fill="#8c908c"/></svg>
<div style="left:54px;top:129px;width:1108px;height:24px;background:linear-gradient(90deg,#393939 0%,#3a3a3a 85%,#2c2c2c 98%);border:1.5px solid #050505;border-radius:2px;box-shadow:inset 0 0 0 1px #4c4c4c;"></div>
<div style="left:1143px;top:130px;width:18px;height:22px;background:linear-gradient(#2a2a2a,#242424);"></div>
<svg style="left:1148px;top:138px;" width="8" height="6" viewBox="0 0 8 6"><path d="M0 0h8L4 6z" fill="#777"/></svg>
<svg style="left:61px;top:133px;" width="16" height="16" viewBox="0 0 16 16"><rect x="1" y="6" width="14" height="10" fill="#8e9599"/><path d="M1 6L14.5 1.5l1 3L2 9z" fill="#b9c0c4"/><path d="M3 5.4l2.5 2.2M7 4l2.5 2.2M11 2.8l2.5 2.2" stroke="#333" stroke-width="1.6"/><rect x="3" y="10" width="6" height="4" fill="#5f676c"/><path d="M10 12h4M12 10v4" stroke="#dfe3e5" stroke-width="1"/></svg>
<span style="left:82.50px;top:133.14px;font-size:11.86px;line-height:14px;color:#cccccc;white-space:pre;transform-origin:0 50%;transform:scaleX(0.9478);">obj</span>
<svg style="left:1171px;top:133px;" width="17" height="14" viewBox="0 0 17 14"><path d="M0 7h6" stroke="#999" stroke-width="1.2"/><path d="M6 3.5l4 1.2v4.6l-4 1.2z M10 3h2.2v8H10z" fill="#e4e4e4"/><path d="M13.6 1.5v11" stroke="#e4e4e4" stroke-width="1.6"/></svg>
<svg style="left:1194px;top:131.7px;" width="18" height="18" viewBox="0 0 18 18"><circle cx="9" cy="9" r="7.6" fill="none" stroke="#5b86c8" stroke-width="1.2"/><circle cx="9" cy="9" r="4.6" fill="none" stroke="#5b86c8" stroke-width="1.2"/><circle cx="9" cy="9" r="1.9" fill="#6fa0e6"/></svg>
<svg style="left:1228px;top:132.5px;" width="19" height="20" viewBox="0 0 19 20"><path d="M1 4L9 1L16 3.5L15.5 12L8 16L1.5 12Z" fill="#a8b3ba"/><path d="M1 4L8 7L8 16L1.5 12Z" fill="#87939b"/><path d="M1 4L9 1L16 3.5L8 7Z" fill="#dde4e8"/><path d="M12 15h7l-3.5 4.5z" fill="#888"/></svg>
<svg style="left:1251px;top:131.5px;" width="22" height="21" viewBox="0 0 22 21"><rect x="1" y="1" width="6" height="9" rx="2" fill="none" stroke="#777" stroke-width="1.2"/><path d="M2 15L6 8l4 7z" fill="none" stroke="#888" stroke-width="1.2"/><circle cx="12.5" cy="8.5" r="5" fill="url(#gBlu)"/><path d="M13 16h7l-3.5 4.5z" fill="#888"/></svg>
<svg style="left:1278px;top:134px;" width="20" height="19" viewBox="0 0 20 19"><rect x="0" y="0" width="14" height="14" fill="#dcdcdc"/><path d="M12 14.5h7L15.5 19z" fill="#888"/></svg>
<div style="left:0px;top:157px;width:1298px;height:2px;background:#161616;"></div>
<div style="left:0px;top:159px;width:1298px;height:31px;background:#2d2d2d;"></div>
<div style="left:10px;top:159px;width:1288px;height:1px;background:#5a5a5a;"></div>
<div style="left:0px;top:159px;width:9px;height:31px;background:linear-gradient(90deg,#3a3a3a,#525252 40%);border-right:1.5px solid #0c0c0c;"></div>
<svg style="left:1px;top:161px;" width="7" height="6" viewBox="0 0 7 6"><path d="M0 6L3.5 0L7 6z" fill="#000"/></svg>
<div style="left:0px;top:189px;width:1298px;height:1px;background:#111;"></div>
<svg style="left:15px;top:166px;" width="18" height="20" viewBox="0 0 18 20"><g fill="#5a646b"><circle cx="4" cy="6" r="2.6"/><circle cx="9" cy="3.6" r="2.4"/><circle cx="12.5" cy="7" r="2.6"/><circle cx="8" cy="10" r="2.8"/></g><g fill="#aab3b9"><rect x="3" y="5" width="2" height="2"/><rect x="8" y="3" width="2" height="2"/><rect x="7" y="9" width="2.5" height="2.5"/></g><path d="M9.5 14h7L13 18z" fill="#aaa"/></svg>
<span style="left:36.25px;top:168.00px;font-size:11.06px;line-height:13px;color:#e2e2e2;white-space:pre;transform-origin:0 50%;transform:scaleX(1.1112);font-weight:bold;">View</span>
<svg style="left:1254px;top:165px;" width="20" height="22" viewBox="0 0 20 22"><g fill="#4f7fd0"><circle cx="4" cy="3" r="2.4"/><circle cx="11.5" cy="6" r="2.4"/><circle cx="4" cy="12" r="2.4"/></g><g fill="#e8e8e8"><rect x="1.2" y="5.6" width="5.6" height="1.6"/><rect x="8.7" y="8.6" width="5.6" height="1.6"/><rect x="1.2" y="14.6" width="5.6" height="1.6"/></g><path d="M12 17h7l-3.5 4.5z" fill="#888"/></svg>
<svg style="left:1277px;top:165px;" width="16" height="16" viewBox="0 0 16 16"><circle cx="8" cy="8" r="6.8" fill="#1e1e1e" stroke="#e6e6e6" stroke-width="1.3"/><text x="8" y="12" font-size="10.5" font-weight="bold" fill="#eee" text-anchor="middle" font-family="Liberation Sans">?</text></svg>
<div style="left:0px;top:190px;width:10px;height:778px;background:linear-gradient(90deg,#3a3a3a,#525252 40%);border-right:1.5px solid #0c0c0c;"></div>
<svg style="left:2px;top:192px;" width="6" height="7" viewBox="0 0 6 7"><path d="M0 0L6 3.5L0 7z" fill="#000"/></svg>
<div style="left:10px;top:190px;width:1262px;height:777px;background:#1a1a1a;"></div>
<div style="left:10px;top:224px;width:1262px;height:580px;background:linear-gradient(#6a8392 0%,#7f939e 30%,#94a5ac 62%,#aab7b9 100%);"></div>
<svg style="left:10px;top:780px;" width="1262" height="154" viewBox="0 0 1262 154"><path d="M0 17.2L1031 6.8L1262 16.6V154H0Z" fill="#2e2e2e"/></svg>
<div style="left:641px;top:822px;width:27px;height:15px;background:#a9a9a9;"></div>
<svg style="left:630px;top:800px;" width="60" height="45" viewBox="0 0 60 45"><path d="M19.6 13v9.5" stroke="#e02020" stroke-width="1"/><path d="M38 36.5l4-1.5" stroke="#e02020" stroke-width="1"/><path d="M3 21.5Q12 23 24 21.6" stroke="#555" stroke-width="0.6" fill="none"/></svg>
<span style="left:649.50px;top:804.90px;font-size:8.85px;line-height:11px;color:#e82020;white-space:pre;">y</span>
<span style="left:671.00px;top:826.90px;font-size:8.85px;line-height:11px;color:#e82020;white-space:pre;">x</span>
<span style="left:657.50px;top:827.40px;font-size:8.85px;line-height:11px;color:#e82020;white-space:pre;font-weight:bold;">z</span>
<span style="left:651.50px;top:827.90px;font-size:8.85px;line-height:11px;color:#ffffff;white-space:pre;font-weight:bold;">z</span>
<span style="left:30.50px;top:920.90px;font-size:8.85px;line-height:11px;color:#20d020;white-space:pre;">y</span>
<svg style="left:29px;top:928px;" width="6" height="4" viewBox="0 0 6 4"><path d="M1 3.5L4 1" stroke="#20d020" stroke-width="1"/></svg>
<div style="left:1133px;top:196px;width:50px;height:16px;background:#2a2a2a;border:1px solid #f0f000;"></div>
<span style="left:1137.00px;top:197.96px;font-size:10.18px;line-height:12px;color:#f0f000;white-space:pre;transform-origin:0 50%;transform:scaleX(1.0932);">persp1</span>
<svg style="left:1173.5px;top:202px;" width="7" height="4" viewBox="0 0 7 4"><path d="M0 0h7L3.5 4z" fill="#f0f000"/></svg>
<div style="left:1187px;top:196px;width:61px;height:16px;background:#2a2a2a;border:1px solid #f0f000;"></div>
<span style="left:1191.00px;top:197.96px;font-size:10.18px;line-height:12px;color:#f0f000;white-space:pre;transform-origin:0 50%;transform:scaleX(1.1536);">cam1 [L]</span>
<svg style="left:1238.5px;top:202px;" width="7" height="4" viewBox="0 0 7 4"><path d="M0 0h7L3.5 4z" fill="#f0f000"/></svg>
<div style="left:1272px;top:190px;width:26px;height:778px;background:#3a3a3a;border-left:1px solid #1c1c1c;"></div>
<div style="left:1273px;top:191px;width:25px;height:8px;background:linear-gradient(90deg,#3a3a3a,#222);border:1px solid #151515;"></div>
<svg style="left:1290px;top:192px;" width="6" height="6" viewBox="0 0 6 6"><path d="M0 0L6 3L0 6z" fill="#000"/></svg>
<div style="left:1274px;top:202px;width:23px;height:22px;background:#c8922a;border:1px solid #6e5218;"></div>
<svg style="left:1277px;top:212px;" width="16" height="9.4" viewBox="0 0 16 9.4"><path d="M8 0.300L15.600 4.700L8 9.100L0.400 4.700Z" fill="#4e5c64" stroke="#eef2f4" stroke-width="0.900"/><path d="M8 2.400L11.800 4.700L8 7L4.200 4.700Z" fill="#cfd8dc"/><path d="M4.200 2.500l7.600 4.400M11.800 2.500l-7.600 4.400" stroke="#dfe6ea" stroke-width="0.700"/></svg>
<div style="left:1274px;top:227px;width:23px;height:22px;background:#c8922a;border:1px solid #6e5218;"></div>
<svg style="left:1279.5px;top:232px;" width="11" height="14.5" viewBox="0 0 11 14.5"><path d="M2.400 6.500V4.600a3.100 3.100 0 0 1 6.200 0V6.500" fill="none" stroke="#f2f2f2" stroke-width="1.700"/><rect x="0.300" y="6.200" width="10.400" height="8" rx="0.800" fill="#e2e2e2"/><path d="M0.300 8.600h10.400M0.300 10.600h10.400M0.300 12.600h10.400" stroke="#a4a4a4" stroke-width="0.700"/></svg>
<svg style="left:1278px;top:256px;" width="14" height="19" viewBox="0 0 14 19"><circle cx="7" cy="6" r="4.500" fill="#343434" stroke="#c4c4c4" stroke-width="0.800"/><path d="M5.200 10.300h3.600v4.200H5.200z" fill="#8e8e8e"/><path d="M5 11.800h4M5 13.400h4" stroke="#4a4a4a" stroke-width="0.700"/><path d="M4.800 3.800l4.400 4.400M9.200 3.800l-4.400 4.400" stroke="#eee" stroke-width="1.300"/></svg>
<svg style="left:1277px;top:281px;" width="22" height="22" viewBox="0 0 22 22"><circle cx="7.400" cy="7.600" r="6.800" fill="url(#gSph)" stroke="#c8c8c8" stroke-width="0.700"/><circle cx="9" cy="8.400" r="4.300" fill="#e2e2e2" stroke="#8e8e8e" stroke-width="0.700"/><path d="M7.600 6v5M10.400 6v5" stroke="#bcbcbc" stroke-width="0.800"/><path d="M14.5 11.5v7l4.500-3.500z" fill="#9a9a9a"/></svg>
<div style="left:1274px;top:301px;width:23px;height:22px;background:#c8922a;border:1px solid #6e5218;"></div>
<svg style="left:1278px;top:304.2px;" width="14" height="19" viewBox="0 0 14 19"><circle cx="7" cy="6" r="4.500" fill="#f0f0f0" stroke="#bcbcbc" stroke-width="0.800"/><path d="M5.200 10.300h3.600v4.200H5.200z" fill="#8e8e8e"/><path d="M5 11.800h4M5 13.400h4" stroke="#4a4a4a" stroke-width="0.700"/></svg>
<svg style="left:1292px;top:315px;" width="5" height="8" viewBox="0 0 5 8"><path d="M0 0v7l4.500-3.500z" fill="#1c1c1c"/></svg>
<svg style="left:1278px;top:328px;" width="14" height="19" viewBox="0 0 14 19"><circle cx="7" cy="6" r="4.500" fill="#e6eac4" stroke="#f4f6e0" stroke-width="0.800"/><path d="M5.200 10.300h3.600v4.200H5.200z" fill="#8e8e8e"/><path d="M5 11.800h4M5 13.400h4" stroke="#4a4a4a" stroke-width="0.700"/><path d="M7 3.200v5.600M4.200 6h5.600" stroke="#1e1e1e" stroke-width="1.600"/></svg>
<svg style="left:1292px;top:340px;" width="5" height="8" viewBox="0 0 5 8"><path d="M0 0v7l4.500-3.500z" fill="#9a9a9a"/></svg>
<svg style="left:1278px;top:352px;" width="14" height="19" viewBox="0 0 14 19"><circle cx="7" cy="6" r="4.500" fill="#e6eac4" stroke="#f4f6e0" stroke-width="0.800"/><path d="M5.200 10.300h3.600v4.200H5.200z" fill="#8e8e8e"/><path d="M5 11.800h4M5 13.400h4" stroke="#4a4a4a" stroke-width="0.700"/><path d="M7 3.200v5.600M4.200 6h5.600" stroke="#1e1e1e" stroke-width="1.600"/><ellipse cx="7" cy="14.400" rx="6.400" ry="2.200" fill="#141414" stroke="#e8e8e8" stroke-width="1"/><ellipse cx="7" cy="14" rx="1.800" ry="0.900" fill="#8e8e8e"/></svg>
<svg style="left:1292px;top:364px;" width="5" height="8" viewBox="0 0 5 8"><path d="M0 0v7l4.500-3.500z" fill="#9a9a9a"/></svg>
<div style="left:1274px;top:377px;width:23px;height:22px;background:#c8922a;border:1px solid #6e5218;"></div>
<svg style="left:1277.5px;top:380.5px;" width="15" height="16" viewBox="0 0 15 16"><path d="M0.500 3.400L7.500 0.500L14.500 3L14 12L7 15.500L1 12Z" fill="#f0f0f0"/><path d="M0.500 3.400L7 6V15.500L1 12Z" fill="#d2d2d2"/><path d="M3.800 4.700L7 6v4.700L3.800 9.200zM0.800 7.800l3 1.400v4.200L1 12zM7 6l3.600-1.400v4.600L7 10.700zM10.600 9.200l3.600-1.500-.2 4.300-3.400 1.700zM4 2l3.500 1.300L11 2 7.500 0.600z" fill="#262626"/></svg>
<svg style="left:1292px;top:390px;" width="5" height="8" viewBox="0 0 5 8"><path d="M0 0v7l4.500-3.500z" fill="#1c1c1c"/></svg>
<svg style="left:1277px;top:405px;" width="18" height="20" viewBox="0 0 18 20"><path d="M0.800 2.600L4 1.400L7.600 4.400" fill="none" stroke="#dcdcdc" stroke-width="1.200"/><path d="M3.600 4.800Q6.400 3.600 9 6Q11.600 7.800 15.400 8L14.400 10Q11 11 8.400 9.800Q5 8.800 3.600 4.800Z" fill="#222" stroke="#e2e2e2" stroke-width="1.100"/><path d="M10 13.500h6.500l-3.250 4z" fill="#9a9a9a"/></svg>
<div style="left:1274px;top:424px;width:23px;height:1px;background:#2c2c2c;"></div>
<svg style="left:1281.5px;top:440.5px;" width="6" height="6" viewBox="0 0 6 6"><circle cx="3" cy="3" r="2.500" fill="#e6e6e6"/></svg>
<svg style="left:1279px;top:462px;" width="13" height="13" viewBox="0 0 13 13"><circle cx="2.800" cy="8.700" r="2.300" fill="#e6e6e6"/><path d="M4 7.500L10.500 2.500" stroke="#e6e6e6" stroke-width="1.200"/></svg>
<svg style="left:1279px;top:486px;" width="13" height="14" viewBox="0 0 13 14"><path d="M1.500 13L4.500 8" stroke="#aaa" stroke-width="1.200"/><path d="M4 9.500L7.500 3.500L9.500 5L6 10.500z" fill="#d8d8d8"/><circle cx="9" cy="3.900" r="2" fill="#f0f0f0"/></svg>
<svg style="left:1277px;top:509px;" width="18" height="18" viewBox="0 0 18 18"><circle cx="4" cy="13.400" r="2.300" fill="#e6e6e6"/><text x="6" y="11" font-size="9.500" font-weight="bold" fill="#f0f0f0" font-family="Liberation Sans" textLength="10" lengthAdjust="spacingAndGlyphs">12</text></svg>
<svg style="left:1277px;top:535px;" width="17" height="17" viewBox="0 0 17 17"><path d="M2 9.500L8.500 6.500L13.500 11L12 15L5 13Z" fill="#d2d2d2"/><path d="M9.500 9L11 2.500" stroke="#e6e6e6" stroke-width="1.400"/></svg>
<svg style="left:1277px;top:559px;" width="19" height="19" viewBox="0 0 19 19"><path d="M2 12L9.500 9L13.500 12L12 16.500L4.500 14.500Z" fill="#cfcfcf"/><text x="6" y="11.600" font-size="9.500" font-weight="bold" fill="#f0f0f0" font-family="Liberation Sans" textLength="10" lengthAdjust="spacingAndGlyphs">12</text></svg>
<svg style="left:1277px;top:586px;" width="17" height="17" viewBox="0 0 17 17"><path d="M2 15V3M2 3H14" stroke="#ddd" stroke-width="1"/><path d="M2 15Q3 5 14 3" fill="none" stroke="#ddd" stroke-width="1.2"/><circle cx="2" cy="3" r="1.4" fill="#eee"/><circle cx="14" cy="3" r="1.4" fill="#eee"/></svg>
<svg style="left:1278px;top:611px;" width="15" height="15" viewBox="0 0 15 15"><rect x="1.5" y="1.5" width="12" height="12" fill="#555"/><path d="M1.5 1.5h6v6h-6zM7.5 7.5h6v6h-6z" fill="#777"/><g fill="#eee"><rect x="0" y="0" width="3" height="3"/><rect x="12" y="0" width="3" height="3"/><rect x="0" y="12" width="3" height="3"/><rect x="12" y="12" width="3" height="3"/></g></svg>
<svg style="left:1277px;top:635px;" width="17" height="17" viewBox="0 0 17 17"><path d="M8 8.5L1.5 5.5M8 8.5L13.5 2M8 8.5L10 15.5" stroke="#e6e6e6" stroke-width="1.5"/><circle cx="8" cy="8.5" r="2.5" fill="#f0f0f0"/></svg>
<svg style="left:1277px;top:660px;" width="17" height="17" viewBox="0 0 17 17"><circle cx="8.5" cy="8.5" r="7.3" fill="none" stroke="#a0a0a0" stroke-width="0.9"/><rect x="4" y="5" width="9" height="7" fill="#e6e6e6"/><path d="M4 8.5h9" stroke="#666" stroke-width="1"/></svg>
<span style="left:1277.50px;top:687.92px;font-size:9.29px;line-height:11px;color:#e0e0e0;white-space:pre;">abc</span>
<div style="left:1274px;top:708px;width:23px;height:22px;background:#c8922a;border:1px solid #6e5218;"></div>
<svg style="left:1277px;top:712px;" width="16" height="14" viewBox="0 0 16 14"><rect x="0.5" y="0.5" width="15" height="13" fill="#f4f4f4" stroke="#555" stroke-width="1"/><path d="M1.5 12.5V8.5l3.5-3 3 2.4 3-2.4 3.5 3v4z" fill="#555"/><path d="M1.5 5.5l3.5-3 3 2.4 3-2.4 3.5 3" fill="none" stroke="#888" stroke-width="1"/></svg>
<div style="left:1274px;top:734px;width:23px;height:1px;background:#2c2c2c;"></div>
<div style="left:1274px;top:745px;width:23px;height:22px;background:#c8922a;border:1px solid #6e5218;"></div>
<svg style="left:1279px;top:748px;" width="14" height="18" viewBox="0 0 14 18"><path d="M6 16.5Q1 9 1 6a5 5 0 0 1 10 0Q11 9 6 16.5Z" fill="#ececec" stroke="#777" stroke-width="0.8"/><circle cx="6" cy="6" r="2" fill="#8a8a8a"/></svg>
<svg style="left:1291px;top:757px;" width="6" height="8" viewBox="0 0 6 8"><path d="M0 0v7l4.500-3.500z" fill="#222"/></svg>
<div style="left:1274px;top:908px;width:23px;height:1px;background:#2c2c2c;"></div>
<div style="left:1274px;top:919px;width:23px;height:22px;background:#c8922a;border:1px solid #6e5218;"></div>
<svg style="left:1278px;top:923px;" width="14" height="14" viewBox="0 0 14 14"><rect x="0" y="0" width="14" height="14" fill="#e6d21e"/><g fill="#e4e4e4"><rect x="1.5" y="1.5" width="5" height="5"/><rect x="7.7" y="1.5" width="5" height="5"/><rect x="1.5" y="7.7" width="5" height="5"/><rect x="7.7" y="7.7" width="5" height="5"/></g></svg>
<svg style="left:1277.5px;top:948px;" width="15" height="14" viewBox="0 0 15 14"><rect x="0" y="0" width="15" height="14" rx="1" fill="#e6e6e6"/><path d="M1.600 7.400Q7.500 1.800 13.400 7.400Q7.500 11.800 1.600 7.400Z" fill="#fff" stroke="#555" stroke-width="0.700"/><path d="M1.600 7.400Q7.500 1.800 13.400 7.400" fill="none" stroke="#111" stroke-width="1.500"/><circle cx="7.600" cy="7.200" r="2.500" fill="#0a0a0a"/><circle cx="6.800" cy="6.400" r="0.700" fill="#fff"/></svg>
<div style="left:1298px;top:105px;width:8.5px;height:863px;background:#474747;border-left:2px solid #0c0c0c;border-right:1.2px solid #1a1a1a;"></div>
<svg style="left:1300.5px;top:502px;" width="4" height="7" viewBox="0 0 4 7"><path d="M4 0v7L0 3.5z" fill="#8a8a8a"/></svg>
<svg style="left:1300.5px;top:564px;" width="4" height="7" viewBox="0 0 4 7"><path d="M0 0v7l4-3.500z" fill="#8a8a8a"/></svg>
<svg style="left:1300.2px;top:525px;" width="6" height="21" viewBox="0 0 6 21"><rect x="0" y="0" width="1.4" height="1.4" fill="#7a7a7a"/><rect x="0" y="3" width="1.4" height="1.4" fill="#7a7a7a"/><rect x="0" y="6" width="1.4" height="1.4" fill="#7a7a7a"/><rect x="0" y="9" width="1.4" height="1.4" fill="#7a7a7a"/><rect x="0" y="12" width="1.4" height="1.4" fill="#7a7a7a"/><rect x="0" y="15" width="1.4" height="1.4" fill="#7a7a7a"/><rect x="0" y="18" width="1.4" height="1.4" fill="#7a7a7a"/><rect x="3" y="0" width="1.4" height="1.4" fill="#7a7a7a"/><rect x="3" y="3" width="1.4" height="1.4" fill="#7a7a7a"/><rect x="3" y="6" width="1.4" height="1.4" fill="#7a7a7a"/><rect x="3" y="9" width="1.4" height="1.4" fill="#7a7a7a"/><rect x="3" y="12" width="1.4" height="1.4" fill="#7a7a7a"/><rect x="3" y="15" width="1.4" height="1.4" fill="#7a7a7a"/><rect x="3" y="18" width="1.4" height="1.4" fill="#7a7a7a"/></svg>
<div style="left:1306.5px;top:105px;width:609.5px;height:430px;background:#3a3a3a;"></div>
<div style="left:1306.5px;top:105px;width:609.5px;height:19px;background:#2b2b2b;"></div>
<div style="left:1306.5px;top:105px;width:119.5px;height:20px;background:linear-gradient(#444,#3a3a3a);border-right:1px solid #181818;border-left:1px solid #181818;"></div>
<span style="left:1313.00px;top:108.94px;font-size:9.73px;line-height:12px;color:#c8c8c8;white-space:pre;transform-origin:0 50%;transform:scaleX(0.8343);font-style:italic;">NT_EMIS_TEXTURE1</span>
<svg style="left:1416px;top:113px;" width="4" height="4" viewBox="0 0 4 4"><path d="M0.3 0.3l3.4 3.4M3.7 0.3l-3.4 3.4" stroke="#d8d8d8" stroke-width="1.05"/></svg>
<div style="left:1427px;top:105px;width:73px;height:18.5px;background:linear-gradient(90deg,#1c1c1c,#2d2d2d 4px,#2f2f2f 50%,#2c2c2c);border-bottom:1px solid #1e1e1e;"></div>
<span style="left:1433.00px;top:108.94px;font-size:9.73px;line-height:12px;color:#cccccc;white-space:pre;transform-origin:0 50%;transform:scaleX(0.9387);">Take List</span>
<svg style="left:1490px;top:113px;" width="4" height="4" viewBox="0 0 4 4"><path d="M0.3 0.3l3.4 3.4M3.7 0.3l-3.4 3.4" stroke="#d8d8d8" stroke-width="1.05"/></svg>
<div style="left:1501px;top:105px;width:124px;height:18.5px;background:linear-gradient(90deg,#1c1c1c,#2d2d2d 4px,#2f2f2f 50%,#2c2c2c);border-bottom:1px solid #1e1e1e;"></div>
<span style="left:1508.25px;top:108.94px;font-size:9.73px;line-height:12px;color:#cccccc;white-space:pre;transform-origin:0 50%;transform:scaleX(0.9505);">Performance Monitor</span>
<svg style="left:1615px;top:113px;" width="4" height="4" viewBox="0 0 4 4"><path d="M0.3 0.3l3.4 3.4M3.7 0.3l-3.4 3.4" stroke="#d8d8d8" stroke-width="1.05"/></svg>
<svg style="left:1635.0px;top:110px;" width="9" height="9" viewBox="0 0 9 9"><path d="M4.5 0v9M0 4.5h9" stroke="#eee" stroke-width="2"/></svg>
<svg style="left:1887px;top:110.5px;" width="10" height="9" viewBox="0 0 10 9"><rect x="0" y="0" width="10" height="9" fill="#ddd"/></svg>
<svg style="left:1906px;top:112px;" width="7" height="5" viewBox="0 0 7 5"><path d="M0 0h7L3.5 5z" fill="#ddd"/></svg>
<div style="left:1306.5px;top:124px;width:609.5px;height:33px;background:linear-gradient(#474747,#3d3d3d 40%,#3a3a3a);"></div>
<svg style="left:1313px;top:134px;" width="16" height="15" viewBox="0 0 16 15"><path d="M0 5.5L6.5 0v3.2H13v4.6H6.5V11z" fill="#d4d4d4"/><path d="M11 9v6l4-3z" fill="#999"/></svg>
<svg style="left:1338px;top:134px;" width="13" height="11" viewBox="0 0 13 11"><path d="M13 5.5L6.5 0v3.2H0v4.6h6.5V11z" fill="#8a8a8a"/></svg>
<div style="left:1361px;top:129px;width:503px;height:24px;background:linear-gradient(90deg,#393939 0%,#3a3a3a 85%,#2c2c2c 98%);border:1.5px solid #050505;border-radius:2px;box-shadow:inset 0 0 0 1px #4c4c4c;"></div>
<div style="left:1844px;top:130px;width:19px;height:22px;background:linear-gradient(#2a2a2a,#242424);"></div>
<svg style="left:1850px;top:137px;" width="8" height="6" viewBox="0 0 8 6"><path d="M0 0h8L4 6z" fill="#777"/></svg>
<svg style="left:1368px;top:132px;" width="16" height="16" viewBox="0 0 16 16"><circle cx="8" cy="8" r="7.6" fill="#f4f4f4"/><path d="M1.2 5.2A7.6 7.6 0 0 1 14.2 3.6Q9 3.4 6.5 7.2Q4 9.6 0.6 9.4A7.6 7.6 0 0 1 1.2 5.2Z" fill="#d8252f"/><path d="M15.4 9.6A7.6 7.6 0 0 1 3 13.8Q7.5 13.6 10 10.4Q12.5 8.6 15.5 8.4Z" fill="#2e56b8"/></svg>
<span style="left:1389.50px;top:132.84px;font-size:11.86px;line-height:14px;color:#cccccc;white-space:pre;transform-origin:0 50%;transform:scaleX(0.9721);">shop</span>
<svg style="left:1419px;top:130px;" width="9" height="22" viewBox="0 0 9 22"><path d="M0.5 0L8 11L0.5 22" fill="none" stroke="#111" stroke-width="1.2"/><path d="M1.6 0L9 11L1.6 22" fill="none" stroke="#4a4a4a" stroke-width="0.8"/></svg>
<svg style="left:1434px;top:131px;" width="18" height="18" viewBox="0 0 18 18"><defs><clipPath id="cpV124"><path d="M1.500 5L8 1.500L16 4.500L16.500 13L9.500 17.500L2 14.500Z"/></clipPath></defs><path d="M1.500 5L8 1.500L16 4.500L16.500 13L9.500 17.500L2 14.500Z" fill="#e07a12"/><g clip-path="url(#cpV124)"><path d="M8 1.500L9 8L9.500 17.500L2 14.500L1.500 5Z" fill="#c8640c"/><g stroke="#241002" stroke-width="1.100" fill="none"><path d="M3 4l1 12M5.200 3l.8 14M7.400 2l.6 15M10 3l.400 14M12 3l1 13M14 4l1.200 10M16 5l.5 8"/></g><path d="M1.500 5L8 1.500L16 4.500L9 8Z" fill="#f09a30" opacity="0.550"/></g></svg>
<span style="left:1456.00px;top:132.84px;font-size:11.86px;line-height:14px;color:#cccccc;white-space:pre;">octane_vopnet1</span>
<svg style="left:1873px;top:132px;" width="17" height="14" viewBox="0 0 17 14"><path d="M0 7h6" stroke="#999" stroke-width="1.2"/><path d="M6 3.5l4 1.2v4.6l-4 1.2z M10 3h2.2v8H10z" fill="#e4e4e4"/><path d="M13.6 1.5v11" stroke="#e4e4e4" stroke-width="1.6"/></svg>
<svg style="left:1895.5px;top:132px;" width="18" height="18" viewBox="0 0 18 18"><circle cx="9" cy="9" r="7.6" fill="none" stroke="#5b86c8" stroke-width="1.2"/><circle cx="9" cy="9" r="4.6" fill="none" stroke="#5b86c8" stroke-width="1.2"/><circle cx="9" cy="9" r="1.9" fill="#6fa0e6"/></svg>
<div style="left:1306.5px;top:156px;width:609.5px;height:1px;background:#1c1c1c;"></div>
<div style="left:1306.5px;top:157px;width:609.5px;height:27px;background:#3a3a3a;"></div>
<div style="left:1306.5px;top:183.5px;width:609.5px;height:2px;background:#131313;"></div>
<svg style="left:1315.5px;top:164px;" width="11.76" height="16.8" viewBox="0 0 14 20"><circle cx="7" cy="6.6" r="6" fill="#d5ece6"/><circle cx="5.4" cy="4.8" r="2.6" fill="#ffffff" opacity="0.8"/><path d="M4.4 11.6h5.2v5H4.4z" fill="#8e9695"/><path d="M4.2 13.6h5.6M4.2 15.4h5.6" stroke="#555" stroke-width="0.8"/></svg>
<svg style="left:1324px;top:179px;" width="7" height="4" viewBox="0 0 7 4"><path d="M0 0h7L3.5 4z" fill="#aaa"/></svg>
<span style="left:1334.50px;top:166.00px;font-size:11.06px;line-height:13px;color:#e2e2e2;white-space:pre;transform-origin:0 50%;transform:scaleX(1.1012);font-weight:bold;">Emission Texture</span>
<div style="left:1440px;top:163px;width:379px;height:20px;background:#131313;border:1px solid #0a0a0a;"></div>
<span style="left:1443.00px;top:165.50px;font-size:12px;line-height:14px;color:#e8e8e8;white-space:pre;font-family:&quot;Liberation Mono&quot;,monospace;transform-origin:0 50%;transform:scaleX(0.8853);">NT_EMIS_TEXTURE1</span>
<svg style="left:1823.5px;top:163.5px;" width="16" height="16" viewBox="0 0 16 16"><g transform="translate(8 8)" fill="#ececec"><rect x="-1.48" y="-7.40" width="2.96" height="4.59" rx="1.04" transform="rotate(0)"/><rect x="-1.48" y="-7.40" width="2.96" height="4.59" rx="1.04" transform="rotate(45)"/><rect x="-1.48" y="-7.40" width="2.96" height="4.59" rx="1.04" transform="rotate(90)"/><rect x="-1.48" y="-7.40" width="2.96" height="4.59" rx="1.04" transform="rotate(135)"/><rect x="-1.48" y="-7.40" width="2.96" height="4.59" rx="1.04" transform="rotate(180)"/><rect x="-1.48" y="-7.40" width="2.96" height="4.59" rx="1.04" transform="rotate(225)"/><rect x="-1.48" y="-7.40" width="2.96" height="4.59" rx="1.04" transform="rotate(270)"/><rect x="-1.48" y="-7.40" width="2.96" height="4.59" rx="1.04" transform="rotate(315)"/><circle r="3.11" fill="none" stroke="#ececec" stroke-width="3.40"/></g></svg>
<svg style="left:1837px;top:178px;" width="6" height="4" viewBox="0 0 6 4"><path d="M0 0h6L3 4z" fill="#999"/></svg>
<span style="left:1850.00px;top:160.00px;font-size:19px;line-height:23px;color:#0c2458;white-space:pre;font-weight:bold;font-style:italic;text-shadow:1px 0 0 #c4d0e6,-1px 0 0 #c4d0e6,0 1px 0 #c4d0e6,0 -1px 0 #c4d0e6;">H</span>
<svg style="left:1860px;top:178px;" width="6" height="4" viewBox="0 0 6 4"><path d="M0 0h6L3 4z" fill="#999"/></svg>
<svg style="left:1872px;top:163px;" width="16" height="16" viewBox="0 0 16 16"><circle cx="8" cy="8" r="6.8" fill="#2a3238" stroke="#e6e6e6" stroke-width="1.2"/><text x="8" y="12" font-size="11" font-weight="bold" font-style="italic" fill="#eee" text-anchor="middle" font-family="Liberation Serif">i</text></svg>
<svg style="left:1895.5px;top:163px;" width="16" height="16" viewBox="0 0 16 16"><circle cx="8" cy="8" r="6.8" fill="#2a3238" stroke="#e6e6e6" stroke-width="1.2"/><text x="8" y="12" font-size="10.5" font-weight="bold" fill="#eee" text-anchor="middle" font-family="Liberation Sans">?</text></svg>
<span style="left:1395.00px;top:193.98px;font-size:10.62px;line-height:13px;color:#cccccc;white-space:pre;transform-origin:0 50%;transform:scaleX(1.0347);">Texture</span>
<div style="left:1448px;top:190px;width:44px;height:20px;background:#2a2a2a;border:1px solid #555;border-radius:2px;"></div>
<div style="left:1450px;top:192px;width:40px;height:16px;background:#ffffff;border-radius:1px;"></div>
<div style="left:1499.5px;top:193.5px;width:13.5px;height:13.5px;background:radial-gradient(circle,#fff 0%,rgba(255,255,255,0.55) 35%,rgba(255,255,255,0) 70%),conic-gradient(from 20deg,#f0e050,#70e070,#50d0e0,#6080f0,#d060e0,#f060a0,#f09050,#f0e050);border-radius:50%;"></div>
<svg style="left:1511px;top:203px;" width="5" height="7" viewBox="0 0 5 7"><path d="M0 0v7l4.5-3.5z" fill="#888"/></svg>
<div style="left:1521px;top:189.5px;width:122px;height:21.5px;background:#131313;border:1px solid #2a2a2a;border-top-color:#0a0a0a;border-left-color:#0a0a0a;"></div>
<span style="left:1525.50px;top:193.75px;font-size:12px;line-height:14px;color:#f0f0f0;white-space:pre;font-family:&quot;Liberation Mono&quot;,monospace;font-weight:bold;">1</span>
<div style="left:1646px;top:189.5px;width:122px;height:21.5px;background:#131313;border:1px solid #2a2a2a;border-top-color:#0a0a0a;border-left-color:#0a0a0a;"></div>
<span style="left:1650.50px;top:193.75px;font-size:12px;line-height:14px;color:#f0f0f0;white-space:pre;font-family:&quot;Liberation Mono&quot;,monospace;font-weight:bold;">1</span>
<div style="left:1771px;top:189.5px;width:121px;height:21.5px;background:#131313;border:1px solid #2a2a2a;border-top-color:#0a0a0a;border-left-color:#0a0a0a;"></div>
<span style="left:1775.50px;top:193.75px;font-size:12px;line-height:14px;color:#f0f0f0;white-space:pre;font-family:&quot;Liberation Mono&quot;,monospace;font-weight:bold;">1</span>
<span style="left:1399.50px;top:218.98px;font-size:10.62px;line-height:13px;color:#cccccc;white-space:pre;transform-origin:0 50%;transform:scaleX(1.0475);">Power</span>
<div style="left:1447px;top:215.5px;width:84px;height:19.5px;background:#131313;border:1px solid #2a2a2a;border-top-color:#0a0a0a;border-left-color:#0a0a0a;"></div>
<span style="left:1450.50px;top:218.75px;font-size:12px;line-height:14px;color:#f0f0f0;white-space:pre;font-family:&quot;Liberation Mono&quot;,monospace;transform-origin:0 50%;transform:scaleX(0.8832);font-weight:bold;">0.000620317</span>
<div style="left:1536px;top:222.0px;width:354px;height:5px;background:linear-gradient(#8c8c8c,#727272);border:1px solid #050505;border-radius:2px;"></div>
<div style="left:1537px;top:223.0px;width:30.59999999999991px;height:3px;background:linear-gradient(#3a7ad0,#164a98 60%);border-radius:1px;"></div>
<svg style="left:1536px;top:228.0px;" width="354" height="2" viewBox="0 0 354 2"><rect x="0.0" y="0" width="1" height="2" fill="#0a0a0a"/><rect x="11.8" y="0" width="1" height="2" fill="#0a0a0a"/><rect x="18.8" y="0" width="1" height="2" fill="#0a0a0a"/><rect x="23.7" y="0" width="1" height="2" fill="#0a0a0a"/><rect x="27.5" y="0" width="1" height="2" fill="#0a0a0a"/><rect x="30.6" y="0" width="1" height="2" fill="#0a0a0a"/><rect x="33.2" y="0" width="1" height="2" fill="#0a0a0a"/><rect x="35.5" y="0" width="1" height="2" fill="#0a0a0a"/><rect x="37.5" y="0" width="1" height="2" fill="#0a0a0a"/><rect x="39.3" y="0" width="1" height="2" fill="#0a0a0a"/><rect x="51.2" y="0" width="1" height="2" fill="#0a0a0a"/><rect x="58.1" y="0" width="1" height="2" fill="#0a0a0a"/><rect x="63.0" y="0" width="1" height="2" fill="#0a0a0a"/><rect x="66.8" y="0" width="1" height="2" fill="#0a0a0a"/><rect x="69.9" y="0" width="1" height="2" fill="#0a0a0a"/><rect x="72.6" y="0" width="1" height="2" fill="#0a0a0a"/><rect x="74.9" y="0" width="1" height="2" fill="#0a0a0a"/><rect x="76.9" y="0" width="1" height="2" fill="#0a0a0a"/><rect x="78.7" y="0" width="1" height="2" fill="#0a0a0a"/><rect x="90.5" y="0" width="1" height="2" fill="#0a0a0a"/><rect x="97.4" y="0" width="1" height="2" fill="#0a0a0a"/><rect x="102.3" y="0" width="1" height="2" fill="#0a0a0a"/><rect x="106.2" y="0" width="1" height="2" fill="#0a0a0a"/><rect x="109.3" y="0" width="1" height="2" fill="#0a0a0a"/><rect x="111.9" y="0" width="1" height="2" fill="#0a0a0a"/><rect x="114.2" y="0" width="1" height="2" fill="#0a0a0a"/><rect x="116.2" y="0" width="1" height="2" fill="#0a0a0a"/><rect x="118.0" y="0" width="1" height="2" fill="#0a0a0a"/><rect x="129.8" y="0" width="1" height="2" fill="#0a0a0a"/><rect x="136.8" y="0" width="1" height="2" fill="#0a0a0a"/><rect x="141.7" y="0" width="1" height="2" fill="#0a0a0a"/><rect x="145.5" y="0" width="1" height="2" fill="#0a0a0a"/><rect x="148.6" y="0" width="1" height="2" fill="#0a0a0a"/><rect x="151.2" y="0" width="1" height="2" fill="#0a0a0a"/><rect x="153.5" y="0" width="1" height="2" fill="#0a0a0a"/><rect x="155.5" y="0" width="1" height="2" fill="#0a0a0a"/><rect x="157.3" y="0" width="1" height="2" fill="#0a0a0a"/><rect x="169.2" y="0" width="1" height="2" fill="#0a0a0a"/><rect x="176.1" y="0" width="1" height="2" fill="#0a0a0a"/><rect x="181.0" y="0" width="1" height="2" fill="#0a0a0a"/><rect x="184.8" y="0" width="1" height="2" fill="#0a0a0a"/><rect x="187.9" y="0" width="1" height="2" fill="#0a0a0a"/><rect x="190.6" y="0" width="1" height="2" fill="#0a0a0a"/><rect x="192.9" y="0" width="1" height="2" fill="#0a0a0a"/><rect x="194.9" y="0" width="1" height="2" fill="#0a0a0a"/><rect x="196.7" y="0" width="1" height="2" fill="#0a0a0a"/><rect x="208.5" y="0" width="1" height="2" fill="#0a0a0a"/><rect x="215.4" y="0" width="1" height="2" fill="#0a0a0a"/><rect x="220.3" y="0" width="1" height="2" fill="#0a0a0a"/><rect x="224.2" y="0" width="1" height="2" fill="#0a0a0a"/><rect x="227.3" y="0" width="1" height="2" fill="#0a0a0a"/><rect x="229.9" y="0" width="1" height="2" fill="#0a0a0a"/><rect x="232.2" y="0" width="1" height="2" fill="#0a0a0a"/><rect x="234.2" y="0" width="1" height="2" fill="#0a0a0a"/><rect x="236.0" y="0" width="1" height="2" fill="#0a0a0a"/><rect x="247.8" y="0" width="1" height="2" fill="#0a0a0a"/><rect x="254.8" y="0" width="1" height="2" fill="#0a0a0a"/><rect x="259.7" y="0" width="1" height="2" fill="#0a0a0a"/><rect x="263.5" y="0" width="1" height="2" fill="#0a0a0a"/><rect x="266.6" y="0" width="1" height="2" fill="#0a0a0a"/><rect x="269.2" y="0" width="1" height="2" fill="#0a0a0a"/><rect x="271.5" y="0" width="1" height="2" fill="#0a0a0a"/><rect x="273.5" y="0" width="1" height="2" fill="#0a0a0a"/><rect x="275.3" y="0" width="1" height="2" fill="#0a0a0a"/><rect x="287.2" y="0" width="1" height="2" fill="#0a0a0a"/><rect x="294.1" y="0" width="1" height="2" fill="#0a0a0a"/><rect x="299.0" y="0" width="1" height="2" fill="#0a0a0a"/><rect x="302.8" y="0" width="1" height="2" fill="#0a0a0a"/><rect x="305.9" y="0" width="1" height="2" fill="#0a0a0a"/><rect x="308.6" y="0" width="1" height="2" fill="#0a0a0a"/><rect x="310.9" y="0" width="1" height="2" fill="#0a0a0a"/><rect x="312.9" y="0" width="1" height="2" fill="#0a0a0a"/><rect x="314.7" y="0" width="1" height="2" fill="#0a0a0a"/><rect x="326.5" y="0" width="1" height="2" fill="#0a0a0a"/><rect x="333.4" y="0" width="1" height="2" fill="#0a0a0a"/><rect x="338.3" y="0" width="1" height="2" fill="#0a0a0a"/><rect x="342.2" y="0" width="1" height="2" fill="#0a0a0a"/><rect x="345.3" y="0" width="1" height="2" fill="#0a0a0a"/><rect x="347.9" y="0" width="1" height="2" fill="#0a0a0a"/><rect x="350.2" y="0" width="1" height="2" fill="#0a0a0a"/><rect x="352.2" y="0" width="1" height="2" fill="#0a0a0a"/></svg>
<div style="left:1564.6px;top:214.5px;width:6.4px;height:20.5px;background:linear-gradient(90deg,#a0a0a0,#7c7c7c 30%,#666);border:1px solid #080808;border-radius:2px;"></div>
<div style="left:1895.7px;top:217.5px;width:16px;height:16px;background:#474747;"></div>
<svg style="left:1895.7px;top:217.5px;" width="16" height="16" viewBox="0 0 16 16"><g transform="translate(8 8)" fill="#ececec"><rect x="-1.24" y="-6.20" width="2.48" height="3.84" rx="0.87" transform="rotate(0)"/><rect x="-1.24" y="-6.20" width="2.48" height="3.84" rx="0.87" transform="rotate(45)"/><rect x="-1.24" y="-6.20" width="2.48" height="3.84" rx="0.87" transform="rotate(90)"/><rect x="-1.24" y="-6.20" width="2.48" height="3.84" rx="0.87" transform="rotate(135)"/><rect x="-1.24" y="-6.20" width="2.48" height="3.84" rx="0.87" transform="rotate(180)"/><rect x="-1.24" y="-6.20" width="2.48" height="3.84" rx="0.87" transform="rotate(225)"/><rect x="-1.24" y="-6.20" width="2.48" height="3.84" rx="0.87" transform="rotate(270)"/><rect x="-1.24" y="-6.20" width="2.48" height="3.84" rx="0.87" transform="rotate(315)"/><circle r="2.60" fill="none" stroke="#ececec" stroke-width="2.85"/></g></svg>
<div style="left:1447px;top:242px;width:13px;height:13px;background:#1a1a1a;border:1px solid #4a4a4a;border-top-color:#333;"></div>
<span style="left:1467.50px;top:241.98px;font-size:10.62px;line-height:13px;color:#cccccc;white-space:pre;transform-origin:0 50%;transform:scaleX(1.1192);">Surface brightness</span>
<div style="left:1895.7px;top:243.5px;width:16px;height:16px;background:#474747;"></div>
<svg style="left:1895.7px;top:243.5px;" width="16" height="16" viewBox="0 0 16 16"><g transform="translate(8 8)" fill="#ececec"><rect x="-1.24" y="-6.20" width="2.48" height="3.84" rx="0.87" transform="rotate(0)"/><rect x="-1.24" y="-6.20" width="2.48" height="3.84" rx="0.87" transform="rotate(45)"/><rect x="-1.24" y="-6.20" width="2.48" height="3.84" rx="0.87" transform="rotate(90)"/><rect x="-1.24" y="-6.20" width="2.48" height="3.84" rx="0.87" transform="rotate(135)"/><rect x="-1.24" y="-6.20" width="2.48" height="3.84" rx="0.87" transform="rotate(180)"/><rect x="-1.24" y="-6.20" width="2.48" height="3.84" rx="0.87" transform="rotate(225)"/><rect x="-1.24" y="-6.20" width="2.48" height="3.84" rx="0.87" transform="rotate(270)"/><rect x="-1.24" y="-6.20" width="2.48" height="3.84" rx="0.87" transform="rotate(315)"/><circle r="2.60" fill="none" stroke="#ececec" stroke-width="2.85"/></g></svg>
<span style="left:1369.50px;top:270.98px;font-size:10.62px;line-height:13px;color:#cccccc;white-space:pre;transform-origin:0 50%;transform:scaleX(1.1589);">Distribution</span>
<div style="left:1447px;top:267.5px;width:84px;height:19.5px;background:#131313;border:1px solid #2a2a2a;border-top-color:#0a0a0a;border-left-color:#0a0a0a;"></div>
<span style="left:1451.50px;top:270.75px;font-size:12px;line-height:14px;color:#f0f0f0;white-space:pre;font-family:&quot;Liberation Mono&quot;,monospace;font-weight:bold;">1</span>
<div style="left:1536px;top:274.0px;width:354px;height:5px;background:linear-gradient(#8c8c8c,#727272);border:1px solid #050505;border-radius:2px;"></div>
<div style="left:1537px;top:275.0px;width:353.0px;height:3px;background:linear-gradient(#3a7ad0,#164a98 60%);border-radius:1px;"></div>
<div style="left:1887.0px;top:266.5px;width:6.4px;height:20.5px;background:linear-gradient(90deg,#a0a0a0,#7c7c7c 30%,#666);border:1px solid #080808;border-radius:2px;"></div>
<div style="left:1895.7px;top:269.5px;width:16px;height:16px;background:#474747;"></div>
<svg style="left:1895.7px;top:269.5px;" width="16" height="16" viewBox="0 0 16 16"><g transform="translate(8 8)" fill="#ececec"><rect x="-1.24" y="-6.20" width="2.48" height="3.84" rx="0.87" transform="rotate(0)"/><rect x="-1.24" y="-6.20" width="2.48" height="3.84" rx="0.87" transform="rotate(45)"/><rect x="-1.24" y="-6.20" width="2.48" height="3.84" rx="0.87" transform="rotate(90)"/><rect x="-1.24" y="-6.20" width="2.48" height="3.84" rx="0.87" transform="rotate(135)"/><rect x="-1.24" y="-6.20" width="2.48" height="3.84" rx="0.87" transform="rotate(180)"/><rect x="-1.24" y="-6.20" width="2.48" height="3.84" rx="0.87" transform="rotate(225)"/><rect x="-1.24" y="-6.20" width="2.48" height="3.84" rx="0.87" transform="rotate(270)"/><rect x="-1.24" y="-6.20" width="2.48" height="3.84" rx="0.87" transform="rotate(315)"/><circle r="2.60" fill="none" stroke="#ececec" stroke-width="2.85"/></g></svg>
<span style="left:1357.00px;top:296.98px;font-size:10.62px;line-height:13px;color:#cccccc;white-space:pre;transform-origin:0 50%;transform:scaleX(1.1305);">Sampling rate</span>
<div style="left:1447px;top:293px;width:84px;height:20px;background:#131313;border:1px solid #2a2a2a;border-top-color:#0a0a0a;border-left-color:#0a0a0a;"></div>
<span style="left:1451.50px;top:296.50px;font-size:12px;line-height:14px;color:#f0f0f0;white-space:pre;font-family:&quot;Liberation Mono&quot;,monospace;font-weight:bold;">1</span>
<div style="left:1536px;top:300.0px;width:354px;height:5px;background:linear-gradient(#8c8c8c,#727272);border:1px solid #050505;border-radius:2px;"></div>
<svg style="left:1536px;top:306.0px;" width="354" height="2" viewBox="0 0 354 2"><rect x="26.6" y="0" width="1" height="2" fill="#0a0a0a"/><rect x="42.2" y="0" width="1" height="2" fill="#0a0a0a"/><rect x="53.3" y="0" width="1" height="2" fill="#0a0a0a"/><rect x="61.9" y="0" width="1" height="2" fill="#0a0a0a"/><rect x="68.9" y="0" width="1" height="2" fill="#0a0a0a"/><rect x="74.8" y="0" width="1" height="2" fill="#0a0a0a"/><rect x="79.9" y="0" width="1" height="2" fill="#0a0a0a"/><rect x="84.5" y="0" width="1" height="2" fill="#0a0a0a"/><rect x="88.5" y="0" width="1" height="2" fill="#0a0a0a"/><rect x="115.1" y="0" width="1" height="2" fill="#0a0a0a"/><rect x="130.7" y="0" width="1" height="2" fill="#0a0a0a"/><rect x="141.8" y="0" width="1" height="2" fill="#0a0a0a"/><rect x="150.4" y="0" width="1" height="2" fill="#0a0a0a"/><rect x="157.4" y="0" width="1" height="2" fill="#0a0a0a"/><rect x="163.3" y="0" width="1" height="2" fill="#0a0a0a"/><rect x="168.4" y="0" width="1" height="2" fill="#0a0a0a"/><rect x="173.0" y="0" width="1" height="2" fill="#0a0a0a"/><rect x="177.0" y="0" width="1" height="2" fill="#0a0a0a"/><rect x="203.6" y="0" width="1" height="2" fill="#0a0a0a"/><rect x="219.2" y="0" width="1" height="2" fill="#0a0a0a"/><rect x="230.3" y="0" width="1" height="2" fill="#0a0a0a"/><rect x="238.9" y="0" width="1" height="2" fill="#0a0a0a"/><rect x="245.9" y="0" width="1" height="2" fill="#0a0a0a"/><rect x="251.8" y="0" width="1" height="2" fill="#0a0a0a"/><rect x="256.9" y="0" width="1" height="2" fill="#0a0a0a"/><rect x="261.5" y="0" width="1" height="2" fill="#0a0a0a"/><rect x="265.5" y="0" width="1" height="2" fill="#0a0a0a"/><rect x="292.1" y="0" width="1" height="2" fill="#0a0a0a"/><rect x="307.7" y="0" width="1" height="2" fill="#0a0a0a"/><rect x="318.8" y="0" width="1" height="2" fill="#0a0a0a"/><rect x="327.4" y="0" width="1" height="2" fill="#0a0a0a"/><rect x="334.4" y="0" width="1" height="2" fill="#0a0a0a"/><rect x="340.3" y="0" width="1" height="2" fill="#0a0a0a"/><rect x="345.4" y="0" width="1" height="2" fill="#0a0a0a"/><rect x="350.0" y="0" width="1" height="2" fill="#0a0a0a"/></svg>
<div style="left:1533.0px;top:292.5px;width:6.4px;height:20.5px;background:linear-gradient(90deg,#a0a0a0,#7c7c7c 30%,#666);border:1px solid #080808;border-radius:2px;"></div>
<div style="left:1895.7px;top:295.5px;width:16px;height:16px;background:#474747;"></div>
<svg style="left:1895.7px;top:295.5px;" width="16" height="16" viewBox="0 0 16 16"><g transform="translate(8 8)" fill="#ececec"><rect x="-1.24" y="-6.20" width="2.48" height="3.84" rx="0.87" transform="rotate(0)"/><rect x="-1.24" y="-6.20" width="2.48" height="3.84" rx="0.87" transform="rotate(45)"/><rect x="-1.24" y="-6.20" width="2.48" height="3.84" rx="0.87" transform="rotate(90)"/><rect x="-1.24" y="-6.20" width="2.48" height="3.84" rx="0.87" transform="rotate(135)"/><rect x="-1.24" y="-6.20" width="2.48" height="3.84" rx="0.87" transform="rotate(180)"/><rect x="-1.24" y="-6.20" width="2.48" height="3.84" rx="0.87" transform="rotate(225)"/><rect x="-1.24" y="-6.20" width="2.48" height="3.84" rx="0.87" transform="rotate(270)"/><rect x="-1.24" y="-6.20" width="2.48" height="3.84" rx="0.87" transform="rotate(315)"/><circle r="2.60" fill="none" stroke="#ececec" stroke-width="2.85"/></g></svg>
<div style="left:1447px;top:320.5px;width:13px;height:13px;background:#1a1a1a;border:1px solid #4a4a4a;border-top-color:#333;"></div>
<svg style="left:1448px;top:320px;" width="13" height="13" viewBox="0 0 13 13"><path d="M2 7.5l2.6 3.6L10.5 1.5" fill="none" stroke="#f2f2f2" stroke-width="2.3"/></svg>
<span style="left:1467.50px;top:319.98px;font-size:10.62px;line-height:13px;color:#cccccc;white-space:pre;transform-origin:0 50%;transform:scaleX(1.1434);">Cast illumination</span>
<div style="left:1895.7px;top:321.5px;width:16px;height:16px;background:#474747;"></div>
<svg style="left:1895.7px;top:321.5px;" width="16" height="16" viewBox="0 0 16 16"><g transform="translate(8 8)" fill="#ececec"><rect x="-1.24" y="-6.20" width="2.48" height="3.84" rx="0.87" transform="rotate(0)"/><rect x="-1.24" y="-6.20" width="2.48" height="3.84" rx="0.87" transform="rotate(45)"/><rect x="-1.24" y="-6.20" width="2.48" height="3.84" rx="0.87" transform="rotate(90)"/><rect x="-1.24" y="-6.20" width="2.48" height="3.84" rx="0.87" transform="rotate(135)"/><rect x="-1.24" y="-6.20" width="2.48" height="3.84" rx="0.87" transform="rotate(180)"/><rect x="-1.24" y="-6.20" width="2.48" height="3.84" rx="0.87" transform="rotate(225)"/><rect x="-1.24" y="-6.20" width="2.48" height="3.84" rx="0.87" transform="rotate(270)"/><rect x="-1.24" y="-6.20" width="2.48" height="3.84" rx="0.87" transform="rotate(315)"/><circle r="2.60" fill="none" stroke="#ececec" stroke-width="2.85"/></g></svg>
<span style="left:1362.50px;top:348.98px;font-size:10.62px;line-height:13px;color:#cccccc;white-space:pre;transform-origin:0 50%;transform:scaleX(1.1063);">Light pass ID</span>
<div style="left:1447px;top:345px;width:84px;height:20px;background:#131313;border:1px solid #2a2a2a;border-top-color:#0a0a0a;border-left-color:#0a0a0a;"></div>
<span style="left:1451.50px;top:348.50px;font-size:12px;line-height:14px;color:#f0f0f0;white-space:pre;font-family:&quot;Liberation Mono&quot;,monospace;font-weight:bold;">1</span>
<div style="left:1536px;top:352.0px;width:354px;height:5px;background:linear-gradient(#8c8c8c,#727272);border:1px solid #050505;border-radius:2px;"></div>
<svg style="left:1536px;top:358.0px;" width="354" height="2" viewBox="0 0 354 2"><rect x="50.2" y="0" width="1" height="2" fill="#0a0a0a"/><rect x="100.7" y="0" width="1" height="2" fill="#0a0a0a"/><rect x="151.1" y="0" width="1" height="2" fill="#0a0a0a"/><rect x="201.4" y="0" width="1" height="2" fill="#0a0a0a"/><rect x="251.8" y="0" width="1" height="2" fill="#0a0a0a"/><rect x="302.2" y="0" width="1" height="2" fill="#0a0a0a"/><rect x="352.5" y="0" width="1" height="2" fill="#0a0a0a"/></svg>
<div style="left:1533.0px;top:344.5px;width:6.4px;height:20.5px;background:linear-gradient(90deg,#a0a0a0,#7c7c7c 30%,#666);border:1px solid #080808;border-radius:2px;"></div>
<div style="left:1895.7px;top:347.5px;width:16px;height:16px;background:#474747;"></div>
<svg style="left:1895.7px;top:347.5px;" width="16" height="16" viewBox="0 0 16 16"><g transform="translate(8 8)" fill="#ececec"><rect x="-1.24" y="-6.20" width="2.48" height="3.84" rx="0.87" transform="rotate(0)"/><rect x="-1.24" y="-6.20" width="2.48" height="3.84" rx="0.87" transform="rotate(45)"/><rect x="-1.24" y="-6.20" width="2.48" height="3.84" rx="0.87" transform="rotate(90)"/><rect x="-1.24" y="-6.20" width="2.48" height="3.84" rx="0.87" transform="rotate(135)"/><rect x="-1.24" y="-6.20" width="2.48" height="3.84" rx="0.87" transform="rotate(180)"/><rect x="-1.24" y="-6.20" width="2.48" height="3.84" rx="0.87" transform="rotate(225)"/><rect x="-1.24" y="-6.20" width="2.48" height="3.84" rx="0.87" transform="rotate(270)"/><rect x="-1.24" y="-6.20" width="2.48" height="3.84" rx="0.87" transform="rotate(315)"/><circle r="2.60" fill="none" stroke="#ececec" stroke-width="2.85"/></g></svg>
<div style="left:1306.5px;top:534px;width:609.5px;height:7px;background:#3f3f3f;border-top:1px solid #5a5a5a;border-bottom:1px solid #1a1a1a;"></div>
<svg style="left:1577.5px;top:535.5px;" width="7" height="4" viewBox="0 0 7 4"><path d="M0 4h7L3.5 0z" fill="#808080"/></svg>
<svg style="left:1639.5px;top:535.5px;" width="7" height="4" viewBox="0 0 7 4"><path d="M0 0h7L3.5 4z" fill="#808080"/></svg>
<svg style="left:1605px;top:535px;" width="21" height="5" viewBox="0 0 21 5"><rect x="0" y="0" width="1.4" height="1.4" fill="#777"/><rect x="0" y="3" width="1.4" height="1.4" fill="#777"/><rect x="3" y="0" width="1.4" height="1.4" fill="#777"/><rect x="3" y="3" width="1.4" height="1.4" fill="#777"/><rect x="6" y="0" width="1.4" height="1.4" fill="#777"/><rect x="6" y="3" width="1.4" height="1.4" fill="#777"/><rect x="9" y="0" width="1.4" height="1.4" fill="#777"/><rect x="9" y="3" width="1.4" height="1.4" fill="#777"/><rect x="12" y="0" width="1.4" height="1.4" fill="#777"/><rect x="12" y="3" width="1.4" height="1.4" fill="#777"/><rect x="15" y="0" width="1.4" height="1.4" fill="#777"/><rect x="15" y="3" width="1.4" height="1.4" fill="#777"/><rect x="18" y="0" width="1.4" height="1.4" fill="#777"/><rect x="18" y="3" width="1.4" height="1.4" fill="#777"/></svg>
<div style="left:1306.5px;top:541px;width:609.5px;height:427px;background:#2e2e2e;"></div>
<div style="left:1306.5px;top:541px;width:609.5px;height:19px;background:#2b2b2b;"></div>
<div style="left:1306.5px;top:541px;width:51.5px;height:18.5px;background:linear-gradient(90deg,#1c1c1c,#2d2d2d 4px,#2f2f2f 50%,#2c2c2c);border-bottom:1px solid #1e1e1e;"></div>
<span style="left:1312.50px;top:544.94px;font-size:9.73px;line-height:12px;color:#cccccc;white-space:pre;transform-origin:0 50%;transform:scaleX(1.0421);font-weight:bold;">/obj</span>
<svg style="left:1349px;top:549px;" width="4" height="4" viewBox="0 0 4 4"><path d="M0.3 0.3l3.4 3.4M3.7 0.3l-3.4 3.4" stroke="#d8d8d8" stroke-width="1.05"/></svg>
<div style="left:1359px;top:541px;width:130px;height:20px;background:linear-gradient(#444,#3a3a3a);border-right:1px solid #181818;border-left:1px solid #181818;"></div>
<span style="left:1367.00px;top:544.94px;font-size:9.73px;line-height:12px;color:#cccccc;white-space:pre;transform-origin:0 50%;transform:scaleX(0.9941);font-weight:bold;">/shop/octane_vopnet1</span>
<svg style="left:1479px;top:549px;" width="4" height="4" viewBox="0 0 4 4"><path d="M0.3 0.3l3.4 3.4M3.7 0.3l-3.4 3.4" stroke="#d8d8d8" stroke-width="1.05"/></svg>
<div style="left:1490px;top:541px;width:54px;height:18.5px;background:linear-gradient(90deg,#1c1c1c,#2d2d2d 4px,#2f2f2f 50%,#2c2c2c);border-bottom:1px solid #1e1e1e;"></div>
<span style="left:1497.00px;top:544.94px;font-size:9.73px;line-height:12px;color:#cccccc;white-space:pre;transform-origin:0 50%;transform:scaleX(1.0388);font-weight:bold;">/out</span>
<svg style="left:1534px;top:549px;" width="4" height="4" viewBox="0 0 4 4"><path d="M0.3 0.3l3.4 3.4M3.7 0.3l-3.4 3.4" stroke="#d8d8d8" stroke-width="1.05"/></svg>
<div style="left:1545px;top:541px;width:103px;height:18.5px;background:linear-gradient(90deg,#1c1c1c,#2d2d2d 4px,#2f2f2f 50%,#2c2c2c);border-bottom:1px solid #1e1e1e;"></div>
<span style="left:1552.00px;top:544.94px;font-size:9.73px;line-height:12px;color:#cccccc;white-space:pre;transform-origin:0 50%;transform:scaleX(0.9552);">Material Palette</span>
<svg style="left:1637px;top:549px;" width="4" height="4" viewBox="0 0 4 4"><path d="M0.3 0.3l3.4 3.4M3.7 0.3l-3.4 3.4" stroke="#d8d8d8" stroke-width="1.05"/></svg>
<svg style="left:1657.25px;top:546px;" width="9" height="9" viewBox="0 0 9 9"><path d="M4.5 0v9M0 4.5h9" stroke="#eee" stroke-width="2"/></svg>
<svg style="left:1887px;top:546.5px;" width="10" height="9" viewBox="0 0 10 9"><rect x="0" y="0" width="10" height="9" fill="#ddd"/></svg>
<svg style="left:1906px;top:548px;" width="7" height="5" viewBox="0 0 7 5"><path d="M0 0h7L3.5 5z" fill="#ddd"/></svg>
<div style="left:1306.5px;top:560px;width:609.5px;height:33px;background:linear-gradient(#474747,#3d3d3d 40%,#3a3a3a);"></div>
<svg style="left:1313px;top:570px;" width="16" height="15" viewBox="0 0 16 15"><path d="M0 5.5L6.5 0v3.2H13v4.6H6.5V11z" fill="#d4d4d4"/><path d="M11 9v6l4-3z" fill="#999"/></svg>
<svg style="left:1338px;top:570px;" width="13" height="11" viewBox="0 0 13 11"><path d="M13 5.5L6.5 0v3.2H0v4.6h6.5V11z" fill="#8a8a8a"/></svg>
<div style="left:1361px;top:565px;width:469px;height:24px;background:linear-gradient(90deg,#393939 0%,#3a3a3a 85%,#2c2c2c 98%);border:1.5px solid #050505;border-radius:2px;box-shadow:inset 0 0 0 1px #4c4c4c;"></div>
<div style="left:1810px;top:566px;width:19px;height:22px;background:linear-gradient(#2a2a2a,#242424);"></div>
<svg style="left:1816px;top:573px;" width="8" height="6" viewBox="0 0 8 6"><path d="M0 0h8L4 6z" fill="#777"/></svg>
<svg style="left:1368px;top:568px;" width="16" height="16" viewBox="0 0 16 16"><circle cx="8" cy="8" r="7.6" fill="#f4f4f4"/><path d="M1.2 5.2A7.6 7.6 0 0 1 14.2 3.6Q9 3.4 6.5 7.2Q4 9.6 0.6 9.4A7.6 7.6 0 0 1 1.2 5.2Z" fill="#d8252f"/><path d="M15.4 9.6A7.6 7.6 0 0 1 3 13.8Q7.5 13.6 10 10.4Q12.5 8.6 15.5 8.4Z" fill="#2e56b8"/></svg>
<span style="left:1389.50px;top:568.84px;font-size:11.86px;line-height:14px;color:#cccccc;white-space:pre;transform-origin:0 50%;transform:scaleX(0.9721);">shop</span>
<svg style="left:1419px;top:566px;" width="9" height="22" viewBox="0 0 9 22"><path d="M0.5 0L8 11L0.5 22" fill="none" stroke="#111" stroke-width="1.2"/><path d="M1.6 0L9 11L1.6 22" fill="none" stroke="#4a4a4a" stroke-width="0.8"/></svg>
<svg style="left:1434px;top:567px;" width="18" height="18" viewBox="0 0 18 18"><defs><clipPath id="cpV560"><path d="M1.500 5L8 1.500L16 4.500L16.500 13L9.500 17.500L2 14.500Z"/></clipPath></defs><path d="M1.500 5L8 1.500L16 4.500L16.500 13L9.500 17.500L2 14.500Z" fill="#e07a12"/><g clip-path="url(#cpV560)"><path d="M8 1.500L9 8L9.500 17.500L2 14.500L1.500 5Z" fill="#c8640c"/><g stroke="#241002" stroke-width="1.100" fill="none"><path d="M3 4l1 12M5.200 3l.8 14M7.400 2l.6 15M10 3l.400 14M12 3l1 13M14 4l1.200 10M16 5l.5 8"/></g><path d="M1.500 5L8 1.500L16 4.500L9 8Z" fill="#f09a30" opacity="0.550"/></g></svg>
<span style="left:1456.00px;top:568.84px;font-size:11.86px;line-height:14px;color:#cccccc;white-space:pre;">octane_vopnet1</span>
<div style="left:1836.5px;top:566.5px;width:22px;height:22px;background:#c8922a;border:1px solid #6e5218;"></div>
<svg style="left:1839px;top:569px;" width="18" height="18" viewBox="0 0 18 18"><path d="M3 16L8 10" stroke="#e8e8e8" stroke-width="1.6"/><circle cx="11" cy="6" r="4.6" fill="#f2e6a0" stroke="#fff" stroke-width="0.8"/><path d="M5 9l4.5 4.5" stroke="#f4f4f4" stroke-width="2.6"/><ellipse cx="7" cy="15.5" rx="4" ry="1.3" fill="#7a5a18" opacity="0.7"/></svg>
<svg style="left:1861.75px;top:567px;" width="18" height="18" viewBox="0 0 18 18"><circle cx="9" cy="9" r="7.6" fill="none" stroke="#5b86c8" stroke-width="1.2"/><circle cx="9" cy="9" r="4.6" fill="none" stroke="#5b86c8" stroke-width="1.2"/><circle cx="9" cy="9" r="1.9" fill="#6fa0e6"/></svg>
<svg style="left:1896.5px;top:568px;" width="16" height="16" viewBox="0 0 16 16"><g transform="translate(8 8)" fill="#ececec"><rect x="-1.44" y="-7.20" width="2.88" height="4.46" rx="1.01" transform="rotate(0)"/><rect x="-1.44" y="-7.20" width="2.88" height="4.46" rx="1.01" transform="rotate(45)"/><rect x="-1.44" y="-7.20" width="2.88" height="4.46" rx="1.01" transform="rotate(90)"/><rect x="-1.44" y="-7.20" width="2.88" height="4.46" rx="1.01" transform="rotate(135)"/><rect x="-1.44" y="-7.20" width="2.88" height="4.46" rx="1.01" transform="rotate(180)"/><rect x="-1.44" y="-7.20" width="2.88" height="4.46" rx="1.01" transform="rotate(225)"/><rect x="-1.44" y="-7.20" width="2.88" height="4.46" rx="1.01" transform="rotate(270)"/><rect x="-1.44" y="-7.20" width="2.88" height="4.46" rx="1.01" transform="rotate(315)"/><circle r="3.02" fill="none" stroke="#ececec" stroke-width="3.31"/></g></svg>
<svg style="left:1910px;top:584px;" width="6" height="4" viewBox="0 0 6 4"><path d="M0 0h6L3 4z" fill="#999"/></svg>
<div style="left:1306.5px;top:592px;width:609.5px;height:2px;background:#1a1a1a;"></div>
<div style="left:1306.5px;top:594px;width:609.5px;height:31px;background:#2d2d2d;border-top:1px solid #555;"></div>
<div style="left:1308px;top:595px;width:9px;height:30px;background:linear-gradient(90deg,#3a3a3a,#525252 40%);border-right:1.5px solid #0c0c0c;"></div>
<svg style="left:1309px;top:597px;" width="7" height="6" viewBox="0 0 7 6"><path d="M0 6L3.5 0L7 6z" fill="#000"/></svg>
<div style="left:1306.5px;top:625px;width:609.5px;height:1px;background:#0f0f0f;"></div>
<svg style="left:1326px;top:602px;" width="14" height="15" viewBox="0 0 14 15"><g stroke="#e6e6e6" stroke-width="1.2" fill="none"><path d="M2.5 0v13.5h7M2.5 4h7M2.5 8.5h7"/></g><g fill="#e6e6e6"><rect x="8.5" y="2.8" width="3" height="2.4"/><rect x="8.5" y="7.3" width="3" height="2.4"/><rect x="8.5" y="12.3" width="3" height="2.4"/></g></svg>
<svg style="left:1350.5px;top:602px;" width="13" height="15" viewBox="0 0 13 15"><rect width="13" height="15" fill="#d8d8d8"/><path d="M0 3.7h13M0 7.5h13M0 11.3h13" stroke="#f6f6f6" stroke-width="1.4"/></svg>
<svg style="left:1372.5px;top:601px;" width="16" height="17" viewBox="0 0 16 17"><rect x="2" y="0" width="14" height="14" fill="#8a8a8a"/><rect x="0" y="5" width="9" height="11" fill="#f0f0f0"/><path d="M1.5 8h2M1.5 10.5h2M1.5 13h2M5 8h2.5M5 10.5h2.5M5 13h2.5" stroke="#333" stroke-width="1.1"/></svg>
<svg style="left:1397.5px;top:603px;" width="13" height="13" viewBox="0 0 13 13"><rect width="13" height="13" fill="#f4f4f4"/><rect x="1" y="1" width="3" height="3" fill="#d02020"/><rect x="5" y="1" width="3" height="3" fill="#20a040"/><rect x="9" y="1" width="3" height="3" fill="#e0c020"/><rect x="1" y="5" width="3" height="3" fill="#2050c0"/><rect x="5" y="5" width="3" height="3" fill="#e07020"/><rect x="9" y="5" width="3" height="3" fill="#8030a0"/><rect x="1" y="9" width="3" height="3" fill="#202020"/><rect x="5" y="9" width="3" height="3" fill="#40b0d0"/><rect x="9" y="9" width="3" height="3" fill="#909090"/></svg>
<svg style="left:1431px;top:603px;" width="13" height="13" viewBox="0 0 13 13"><rect x="0.5" y="0.5" width="12" height="12" fill="#2a2a2a" stroke="#bbb"/><rect x="2" y="2.5" width="5" height="3" fill="#ddd"/><rect x="5.5" y="7.5" width="5.5" height="3" fill="#ddd"/></svg>
<svg style="left:1454px;top:602px;" width="14" height="15" viewBox="0 0 14 15"><path d="M0 0h14v10l-4.5 5H0z" fill="#f0dc5a"/><path d="M14 10h-4.5v5z" fill="#b8a030"/><path d="M2.5 3.5h9M2.5 6h9M2.5 8.5h5" stroke="#3a3414" stroke-width="1.2"/></svg>
<svg style="left:1478px;top:602px;" width="16" height="14" viewBox="0 0 16 14"><path d="M1 5h14v8H1z" fill="#c68a3c"/><path d="M1 5L4 1h8l3 4z" fill="#e6b368"/><path d="M5.5 5h5v2.4h-5z" fill="#6a4414"/></svg>
<svg style="left:1720px;top:602px;" width="10" height="15" viewBox="0 0 10 15"><path d="M5 0v15" stroke="#5b8fd8" stroke-width="0.9"/><g fill="#e6e6e6"><rect x="2" y="2.5" width="6" height="2.4"/><rect x="2" y="10" width="6" height="2.4"/></g></svg>
<svg style="left:1741px;top:607px;" width="15" height="5" viewBox="0 0 15 5"><path d="M0 2.5h15" stroke="#444" stroke-width="1"/><g fill="#e6e6e6"><rect x="1" y="1.3" width="5" height="2.4"/><rect x="9" y="1.3" width="5" height="2.4"/></g></svg>
<svg style="left:1765.5px;top:602px;" width="15" height="15" viewBox="0 0 15 15"><path d="M6 0v15M9 0v15" stroke="#5b8fd8" stroke-width="1"/><g fill="#e6e6e6"><rect x="0" y="2.5" width="5" height="2.4"/><rect x="10" y="10.5" width="5" height="2.4"/></g></svg>
<svg style="left:1789px;top:603px;" width="16" height="13" viewBox="0 0 16 13"><path d="M0 4h14M2 8h14" stroke="#5b8fd8" stroke-width="1"/><g fill="#e6e6e6"><rect x="1" y="0.5" width="5" height="2.4"/><rect x="10" y="9.5" width="5" height="2.4"/></g></svg>
<svg style="left:1812.75px;top:602px;" width="16" height="15" viewBox="0 0 16 15"><g stroke="#5b8fd8" stroke-width="1.1"><path d="M4 0v15M8.5 0v15M13 0v15M0 3h16M0 7.5h16M0 12h16"/></g><g fill="#e6e6e6"><rect x="1" y="1.8" width="5" height="2.4"/><rect x="9.5" y="10.8" width="5" height="2.4"/></g></svg>
<svg style="left:1836.5px;top:602px;" width="16" height="15" viewBox="0 0 16 15"><g stroke="#5b8fd8" stroke-width="1.1"><path d="M4 0v15M8.5 0v15M13 0v15M0 3h16M0 7.5h16M0 12h16"/></g></svg>
<svg style="left:1870px;top:602px;" width="17" height="17" viewBox="0 0 17 17"><circle cx="6.5" cy="6.5" r="5" fill="#3a3a3a" stroke="#e8e8e8" stroke-width="1.6"/><path d="M10.2 10.2L15.5 15.5" stroke="#d8d8d8" stroke-width="2.4"/></svg>
<svg style="left:1894px;top:602.5px;" width="16" height="14" viewBox="0 0 16 14"><rect x="0" y="0" width="16" height="14" rx="1" fill="#e6e6e6"/><path d="M1.600 7.400Q8 1.600 14.400 7.400Q8 12 1.600 7.400Z" fill="#fff" stroke="#555" stroke-width="0.700"/><path d="M1.600 7.400Q8 1.600 14.400 7.400" fill="none" stroke="#111" stroke-width="1.500"/><circle cx="8.100" cy="7.200" r="2.600" fill="#0a0a0a"/><circle cx="7.300" cy="6.400" r="0.700" fill="#fff"/></svg>
<span style="left:1820.00px;top:629.50px;font-size:17.5px;line-height:21px;color:#3e3e3e;white-space:pre;transform-origin:0 50%;transform:scaleX(0.9035);font-weight:bold;">VEX Builder</span>
<svg style="left:1308px;top:626px;" width="608" height="342" viewBox="0 0 608 342"><path d="M166.6 91.2C200 98 222 128 241.3 159.8S285 232 330.8 245.6" fill="none" stroke="#8c7530" stroke-width="1.1"/><path d="M235.8 158.9L243.2 154.6L245 165.9z" fill="#9a8236"/><path d="M158 253.4L240 254.6" fill="none" stroke="#6e6e6e" stroke-width="1"/><path d="M240 254.6L330.8 255.7" fill="none" stroke="#6e6e6e" stroke-width="1.6"/><path d="M236.2 250.6v8.8L247 255z" fill="#8c8c8c"/><path d="M411 176C425 180 427 215 431 232S440 264 449.5 267.5" fill="none" stroke="#a4a4a4" stroke-width="1"/></svg>
<span style="left:1389.50px;top:679.50px;font-size:13px;line-height:16px;color:#d8d8d8;white-space:pre;transform-origin:0 50%;transform:scaleX(0.8861);">NT_EMIS_TEXTURE1</span>
<div style="left:1390.9px;top:692.8px;width:84.4px;height:100.39999999999995px;border:2.2px solid #f2b40a;"></div>
<div style="left:1394.5px;top:696px;width:78.0px;height:15px;background:#b4b4b4;"></div>
<div style="left:1442.7px;top:696px;width:9.6px;height:15px;background:#b8c0c4;border:1px solid #a4d4de;"></div>
<div style="left:1453.1px;top:696px;width:9.2px;height:15px;background:#bab8aa;border:1px solid #d6c63c;"></div>
<div style="left:1463.1px;top:696px;width:9.4px;height:15px;background:#b0b0b0;border-left:1px solid #8a8a8a;"></div>
<svg style="left:1397.5px;top:697.5px;" width="8" height="12" viewBox="0 0 8 12"><circle cx="4" cy="4" r="3.6" fill="#e4f4f0"/><rect x="2.6" y="7.4" width="2.8" height="3.4" fill="#8a9292"/></svg>
<div style="left:1404.3px;top:712.0px;width:68.2px;height:78.79999999999995px;background:#686474;"></div>
<div style="left:1394.5px;top:712.0px;width:8.7px;height:8.8px;background:#74c274;"></div>
<svg style="left:1397.7px;top:713.8px;" width="4.4" height="5" viewBox="0 0 4.4 5"><path d="M0 0.600h2.200L3.400 2.500L0 4.300z" fill="#0c0c0c"/></svg>
<span style="left:1407.10px;top:711.40px;font-size:7.6px;line-height:9px;color:#d0d0d0;white-space:pre;transform-origin:0 50%;transform:scaleX(1.0777);">effici...</span>
<div style="left:1394.5px;top:722.0px;width:8.7px;height:8.8px;background:#6eb494;"></div>
<svg style="left:1397.7px;top:723.8px;" width="4.4" height="5" viewBox="0 0 4.4 5"><path d="M0 0.600h2.200L3.400 2.500L0 4.300z" fill="#0c0c0c"/></svg>
<span style="left:1407.10px;top:721.40px;font-size:7.6px;line-height:9px;color:#d0d0d0;white-space:pre;transform-origin:0 50%;transform:scaleX(1.0153);">power</span>
<div style="left:1394.5px;top:732.0px;width:8.7px;height:8.8px;background:#6cb2dc;"></div>
<svg style="left:1397.7px;top:733.8px;" width="4.4" height="5" viewBox="0 0 4.4 5"><path d="M0 0.600h2.200L3.400 2.500L0 4.300z" fill="#0c0c0c"/></svg>
<span style="left:1407.10px;top:731.40px;font-size:7.6px;line-height:9px;color:#d0d0d0;white-space:pre;transform-origin:0 50%;transform:scaleX(1.0283);">surfaceBrightness</span>
<div style="left:1394.5px;top:742.0px;width:8.7px;height:8.8px;background:#74c274;"></div>
<svg style="left:1397.7px;top:743.8px;" width="4.4" height="5" viewBox="0 0 4.4 5"><path d="M0 0.600h2.200L3.400 2.500L0 4.300z" fill="#0c0c0c"/></svg>
<span style="left:1407.10px;top:741.40px;font-size:7.6px;line-height:9px;color:#d0d0d0;white-space:pre;transform-origin:0 50%;transform:scaleX(1.0756);">distribution</span>
<div style="left:1394.5px;top:752.0px;width:8.7px;height:8.8px;background:#6eb494;"></div>
<svg style="left:1397.7px;top:753.8px;" width="4.4" height="5" viewBox="0 0 4.4 5"><path d="M0 0.600h2.200L3.400 2.500L0 4.300z" fill="#0c0c0c"/></svg>
<span style="left:1407.10px;top:751.40px;font-size:7.6px;line-height:9px;color:#d0d0d0;white-space:pre;transform-origin:0 50%;transform:scaleX(1.0378);">sampling_rate</span>
<div style="left:1394.5px;top:762.0px;width:8.7px;height:8.8px;background:#6cb2dc;"></div>
<svg style="left:1397.7px;top:763.8px;" width="4.4" height="5" viewBox="0 0 4.4 5"><path d="M0 0.600h2.200L3.400 2.500L0 4.300z" fill="#0c0c0c"/></svg>
<span style="left:1407.10px;top:761.40px;font-size:7.6px;line-height:9px;color:#d0d0d0;white-space:pre;transform-origin:0 50%;transform:scaleX(1.0661);">illumination</span>
<div style="left:1394.5px;top:772.0px;width:8.7px;height:8.8px;background:#6cb2dc;"></div>
<svg style="left:1397.7px;top:773.8px;" width="4.4" height="5" viewBox="0 0 4.4 5"><path d="M0 0.600h2.200L3.400 2.500L0 4.300z" fill="#0c0c0c"/></svg>
<span style="left:1407.10px;top:771.40px;font-size:7.6px;line-height:9px;color:#d0d0d0;white-space:pre;transform-origin:0 50%;transform:scaleX(1.0095);">lightPassId</span>
<div style="left:1394.5px;top:782.0px;width:8.7px;height:8.8px;background:#6eb494;"></div>
<svg style="left:1397.7px;top:783.8px;" width="4.4" height="5" viewBox="0 0 4.4 5"><path d="M0 0.600h2.200L3.400 2.500L0 4.300z" fill="#0c0c0c"/></svg>
<span style="left:1407.10px;top:781.40px;font-size:7.6px;line-height:9px;color:#d0d0d0;white-space:pre;transform-origin:0 50%;transform:scaleX(1.0451);">(deprecated)</span>
<div style="left:1462.9px;top:711.4px;width:9.6px;height:10px;background:#e6e27e;border-left:1px solid #3a3a3a;border-bottom:1px solid #3a3a3a;"></div>
<svg style="left:1466.9px;top:713.8px;" width="4.4" height="5" viewBox="0 0 4.4 5"><path d="M0 0.600h2.200L3.400 2.500L0 4.300z" fill="#0c0c0c"/></svg>
<span style="left:1441.90px;top:711.10px;font-size:7.6px;line-height:9px;color:#d0d0d0;white-space:pre;transform-origin:0 50%;transform:scaleX(0.8464);">NT_...</span>
<span style="left:1636.30px;top:764.60px;font-size:13px;line-height:16px;color:#d8d8d8;white-space:pre;transform-origin:0 50%;transform:scaleX(0.8998);">NT_MED_VOLUME1</span>
<div style="left:1641px;top:781.5px;width:78px;height:14.5px;background:#b4b4b4;"></div>
<div style="left:1689.2px;top:781.5px;width:9.6px;height:14.5px;background:#b8c0c4;border:1px solid #a4d4de;"></div>
<div style="left:1699.6px;top:781.5px;width:9.2px;height:14.5px;background:#bab8aa;border:1px solid #d6c63c;"></div>
<div style="left:1709.6px;top:781.5px;width:9.4px;height:14.5px;background:#b0b0b0;border-left:1px solid #8a8a8a;"></div>
<div style="left:1642.5px;top:783.5px;width:10.5px;height:11.5px;background:linear-gradient(#c8ece0,#5ab48e 55%,#3a946e);"></div>
<div style="left:1650.8px;top:797.0px;width:68.2px;height:88.79999999999995px;background:#686474;"></div>
<div style="left:1641px;top:797.0px;width:8.7px;height:8.8px;background:#6eb494;"></div>
<svg style="left:1644.2px;top:798.8px;" width="4.4" height="5" viewBox="0 0 4.4 5"><path d="M0 0.600h2.200L3.400 2.500L0 4.300z" fill="#0c0c0c"/></svg>
<span style="left:1653.60px;top:796.40px;font-size:7.6px;line-height:9px;color:#d0d0d0;white-space:pre;transform-origin:0 50%;transform:scaleX(0.9872);">scale</span>
<div style="left:1641px;top:807.0px;width:8.7px;height:8.8px;background:#74c274;"></div>
<svg style="left:1644.2px;top:808.8px;" width="4.4" height="5" viewBox="0 0 4.4 5"><path d="M0 0.600h2.200L3.400 2.500L0 4.300z" fill="#0c0c0c"/></svg>
<span style="left:1653.60px;top:806.40px;font-size:7.6px;line-height:9px;color:#d0d0d0;white-space:pre;transform-origin:0 50%;transform:scaleX(1.0433);">absorption</span>
<div style="left:1641px;top:817.0px;width:8.7px;height:8.8px;background:#a6dc8c;"></div>
<svg style="left:1644.2px;top:818.8px;" width="4.4" height="5" viewBox="0 0 4.4 5"><path d="M0 0.600h2.200L3.400 2.500L0 4.300z" fill="#0c0c0c"/></svg>
<span style="left:1653.60px;top:816.40px;font-size:7.6px;line-height:9px;color:#d0d0d0;white-space:pre;transform-origin:0 50%;transform:scaleX(1.0320);">absorptionRamp</span>
<div style="left:1641px;top:827.0px;width:8.7px;height:8.8px;background:#6cb2dc;"></div>
<svg style="left:1644.2px;top:828.8px;" width="4.4" height="5" viewBox="0 0 4.4 5"><path d="M0 0.600h2.200L3.400 2.500L0 4.300z" fill="#0c0c0c"/></svg>
<span style="left:1653.60px;top:826.40px;font-size:7.6px;line-height:9px;color:#d0d0d0;white-space:pre;transform-origin:0 50%;transform:scaleX(1.0570);">invertAbsorption</span>
<div style="left:1641px;top:837.0px;width:8.7px;height:8.8px;background:#74c274;"></div>
<svg style="left:1644.2px;top:838.8px;" width="4.4" height="5" viewBox="0 0 4.4 5"><path d="M0 0.600h2.200L3.400 2.500L0 4.300z" fill="#0c0c0c"/></svg>
<span style="left:1653.60px;top:836.40px;font-size:7.6px;line-height:9px;color:#d0d0d0;white-space:pre;transform-origin:0 50%;transform:scaleX(1.0631);">scattering</span>
<div style="left:1641px;top:847.0px;width:8.7px;height:8.8px;background:#a6dc8c;"></div>
<svg style="left:1644.2px;top:848.8px;" width="4.4" height="5" viewBox="0 0 4.4 5"><path d="M0 0.600h2.200L3.400 2.500L0 4.300z" fill="#0c0c0c"/></svg>
<span style="left:1653.60px;top:846.40px;font-size:7.6px;line-height:9px;color:#d0d0d0;white-space:pre;transform-origin:0 50%;transform:scaleX(1.0342);">scatteringRamp</span>
<div style="left:1641px;top:857.0px;width:8.7px;height:8.8px;background:#e8a890;"></div>
<svg style="left:1644.2px;top:858.8px;" width="4.4" height="5" viewBox="0 0 4.4 5"><path d="M0 0.600h2.200L3.400 2.500L0 4.300z" fill="#0c0c0c"/></svg>
<span style="left:1653.60px;top:856.40px;font-size:7.6px;line-height:9px;color:#d0d0d0;white-space:pre;transform-origin:0 50%;transform:scaleX(1.0150);">phase</span>
<div style="left:1641px;top:867.0px;width:8.7px;height:8.8px;background:#e6e27e;"></div>
<svg style="left:1644.2px;top:868.8px;" width="4.4" height="5" viewBox="0 0 4.4 5"><path d="M0 0.600h2.200L3.400 2.500L0 4.300z" fill="#0c0c0c"/></svg>
<span style="left:1653.60px;top:866.40px;font-size:7.6px;line-height:9px;color:#d0d0d0;white-space:pre;transform-origin:0 50%;transform:scaleX(1.0179);">emission</span>
<div style="left:1641px;top:877.0px;width:8.7px;height:8.8px;background:#a6dc8c;"></div>
<svg style="left:1644.2px;top:878.8px;" width="4.4" height="5" viewBox="0 0 4.4 5"><path d="M0 0.600h2.200L3.400 2.500L0 4.300z" fill="#0c0c0c"/></svg>
<span style="left:1653.60px;top:876.40px;font-size:7.6px;line-height:9px;color:#d0d0d0;white-space:pre;transform-origin:0 50%;transform:scaleX(1.0155);">emissionRamp</span>
<div style="left:1709.4px;top:796.4px;width:9.6px;height:10px;background:#bdbdbd;border-left:1px solid #3a3a3a;border-bottom:1px solid #3a3a3a;"></div>
<svg style="left:1713.4px;top:798.8px;" width="4.4" height="5" viewBox="0 0 4.4 5"><path d="M0 0.600h2.200L3.400 2.500L0 4.300z" fill="#0c0c0c"/></svg>
<span style="left:1688.40px;top:796.10px;font-size:7.6px;line-height:9px;color:#d0d0d0;white-space:pre;transform-origin:0 50%;transform:scaleX(0.8464);">NT_...</span>
<span style="left:1383.20px;top:842.70px;font-size:13px;line-height:16px;color:#d8d8d8;white-space:pre;transform-origin:0 50%;transform:scaleX(0.8899);">NT_VOLUME_RAMP1</span>
<div style="left:1388.2px;top:859.8px;width:77.79999999999995px;height:13.800000000000068px;background:#b4b4b4;"></div>
<div style="left:1436.2px;top:859.8px;width:9.6px;height:13.800000000000068px;background:#b8c0c4;border:1px solid #a4d4de;"></div>
<div style="left:1446.6px;top:859.8px;width:9.2px;height:13.800000000000068px;background:#bab8aa;border:1px solid #d6c63c;"></div>
<div style="left:1456.6px;top:859.8px;width:9.4px;height:13.800000000000068px;background:#b0b0b0;border-left:1px solid #8a8a8a;"></div>
<div style="left:1389.7px;top:861.8px;width:10.5px;height:10.800000000000068px;background:linear-gradient(#c8ece0,#5ab48e 55%,#3a946e);"></div>
<div style="left:1398.0px;top:874.6px;width:67.99999999999996px;height:58.799999999999955px;background:#686474;"></div>
<div style="left:1388.2px;top:874.6px;width:8.7px;height:8.8px;background:#6cb2dc;"></div>
<svg style="left:1391.4px;top:876.4px;" width="4.4" height="5" viewBox="0 0 4.4 5"><path d="M0 0.600h2.200L3.400 2.500L0 4.300z" fill="#0c0c0c"/></svg>
<span style="left:1400.80px;top:874.00px;font-size:7.6px;line-height:9px;color:#d0d0d0;white-space:pre;transform-origin:0 50%;transform:scaleX(1.0219);">grad...</span>
<div style="left:1388.2px;top:884.6px;width:8.7px;height:8.8px;background:#6eb494;"></div>
<svg style="left:1391.4px;top:886.4px;" width="4.4" height="5" viewBox="0 0 4.4 5"><path d="M0 0.600h2.200L3.400 2.500L0 4.300z" fill="#0c0c0c"/></svg>
<span style="left:1400.80px;top:884.00px;font-size:7.6px;line-height:9px;color:#d0d0d0;white-space:pre;transform-origin:0 50%;transform:scaleX(1.0200);">maxGridValue</span>
<div style="left:1388.2px;top:894.6px;width:8.7px;height:8.8px;background:#6eb494;"></div>
<svg style="left:1391.4px;top:896.4px;" width="4.4" height="5" viewBox="0 0 4.4 5"><path d="M0 0.600h2.200L3.400 2.500L0 4.300z" fill="#0c0c0c"/></svg>
<span style="left:1400.80px;top:894.00px;font-size:7.6px;line-height:9px;color:#d0d0d0;white-space:pre;transform-origin:0 50%;transform:scaleX(0.9785);">Key 1</span>
<div style="left:1388.2px;top:904.6px;width:8.7px;height:8.8px;background:#6eb494;"></div>
<svg style="left:1391.4px;top:906.4px;" width="4.4" height="5" viewBox="0 0 4.4 5"><path d="M0 0.600h2.200L3.400 2.500L0 4.300z" fill="#0c0c0c"/></svg>
<span style="left:1400.80px;top:904.00px;font-size:7.6px;line-height:9px;color:#d0d0d0;white-space:pre;transform-origin:0 50%;transform:scaleX(0.9785);">Key 2</span>
<div style="left:1388.2px;top:914.6px;width:8.7px;height:8.8px;background:#6eb494;"></div>
<svg style="left:1391.4px;top:916.4px;" width="4.4" height="5" viewBox="0 0 4.4 5"><path d="M0 0.600h2.200L3.400 2.500L0 4.300z" fill="#0c0c0c"/></svg>
<span style="left:1400.80px;top:914.00px;font-size:7.6px;line-height:9px;color:#d0d0d0;white-space:pre;transform-origin:0 50%;transform:scaleX(0.9785);">Key 3</span>
<div style="left:1388.2px;top:924.6px;width:8.7px;height:8.8px;background:#6eb494;"></div>
<svg style="left:1391.4px;top:926.4px;" width="4.4" height="5" viewBox="0 0 4.4 5"><path d="M0 0.600h2.200L3.400 2.500L0 4.300z" fill="#0c0c0c"/></svg>
<span style="left:1400.80px;top:924.00px;font-size:7.6px;line-height:9px;color:#d0d0d0;white-space:pre;transform-origin:0 50%;transform:scaleX(0.9785);">Key 4</span>
<div style="left:1456.4px;top:874.0px;width:9.6px;height:10px;background:#a6dc8c;border-left:1px solid #3a3a3a;border-bottom:1px solid #3a3a3a;"></div>
<svg style="left:1460.4px;top:876.4px;" width="4.4" height="5" viewBox="0 0 4.4 5"><path d="M0 0.600h2.200L3.400 2.500L0 4.300z" fill="#0c0c0c"/></svg>
<span style="left:1435.40px;top:873.70px;font-size:7.6px;line-height:9px;color:#d0d0d0;white-space:pre;transform-origin:0 50%;transform:scaleX(0.8464);">NT_...</span>
<span style="left:1753.50px;top:846.40px;font-size:13px;line-height:16px;color:#d8d8d8;white-space:pre;transform-origin:0 50%;transform:scaleX(1.0218);">octane_material1</span>
<div style="left:1758px;top:863px;width:78px;height:14.799999999999955px;background:#b4b4b4;"></div>
<div style="left:1806.2px;top:863px;width:9.6px;height:14.799999999999955px;background:#b8c0c4;border:1px solid #a4d4de;"></div>
<div style="left:1816.6px;top:863px;width:9.2px;height:14.799999999999955px;background:#bab8aa;border:1px solid #d6c63c;"></div>
<div style="left:1826.6px;top:863px;width:9.4px;height:14.799999999999955px;background:#b0b0b0;border-left:1px solid #8a8a8a;"></div>
<svg style="left:1760px;top:865px;" width="11" height="11" viewBox="0 0 11 11"><g fill="#6a6a6a"><circle cx="3" cy="3" r="1.6"/><circle cx="7" cy="2.4" r="1.4"/><circle cx="5" cy="6" r="1.8"/><circle cx="9" cy="6" r="1.3"/><circle cx="6.6" cy="9" r="1.2"/></g><g fill="#ddd"><circle cx="4.4" cy="4.2" r="0.8"/><circle cx="7.6" cy="4.6" r="0.7"/></g></svg>
<div style="left:1767.8px;top:878.8px;width:68.2px;height:18.799999999999955px;background:#686474;"></div>
<div style="left:1758px;top:878.8px;width:8.7px;height:8.8px;background:#e6e27e;"></div>
<svg style="left:1761.2px;top:880.5999999999999px;" width="4.4" height="5" viewBox="0 0 4.4 5"><path d="M0 0.600h2.200L3.400 2.500L0 4.300z" fill="#0c0c0c"/></svg>
<span style="left:1770.60px;top:878.20px;font-size:7.6px;line-height:9px;color:#d0d0d0;white-space:pre;transform-origin:0 50%;transform:scaleX(1.0737);">material</span>
<div style="left:1758px;top:888.8px;width:8.7px;height:8.8px;background:#bdbdbd;"></div>
<svg style="left:1761.2px;top:890.5999999999999px;" width="4.4" height="5" viewBox="0 0 4.4 5"><path d="M0 0.600h2.200L3.400 2.500L0 4.300z" fill="#0c0c0c"/></svg>
<span style="left:1770.60px;top:888.20px;font-size:7.6px;line-height:9px;color:#d0d0d0;white-space:pre;transform-origin:0 50%;transform:scaleX(1.0367);">medium</span>
<div style="left:0px;top:968px;width:1916px;height:45px;background:#303030;border-top:1px solid #565656;"></div>
<div style="left:0px;top:968px;width:9px;height:45px;background:linear-gradient(90deg,#3a3a3a,#525252 40%);border-right:1.5px solid #0c0c0c;"></div>
<svg style="left:1px;top:1004px;" width="7" height="6" viewBox="0 0 7 6"><path d="M0 0h7L3.5 6z" fill="#000"/></svg>
<div style="left:0px;top:1012px;width:1916px;height:1px;background:#0c0c0c;"></div>
<div style="left:19px;top:978px;width:27px;height:24px;background:linear-gradient(#4c4c4c,#3a3a3a);border:1px solid #1c1c1c;"></div>
<div style="left:46px;top:978px;width:27px;height:24px;background:linear-gradient(#4c4c4c,#3a3a3a);border:1px solid #1c1c1c;"></div>
<div style="left:73px;top:978px;width:27px;height:24px;background:linear-gradient(#4c4c4c,#3a3a3a);border:1px solid #1c1c1c;"></div>
<div style="left:100px;top:978px;width:27px;height:24px;background:#c8922a;border:1px solid #7a5a18;"></div>
<div style="left:127px;top:978px;width:27px;height:24px;background:linear-gradient(#4c4c4c,#3a3a3a);border:1px solid #1c1c1c;"></div>
<div style="left:154px;top:978px;width:27px;height:24px;background:linear-gradient(#4c4c4c,#3a3a3a);border:1px solid #1c1c1c;"></div>
<svg style="left:19px;top:978px;" width="27" height="24" viewBox="0 0 27 24"><g fill="#e4e4e4"><rect x="5.5" y="7" width="2.6" height="10" fill="#cfcfcf"/><path d="M8.6 12L15.5 7.8v8.4zM16 12l6.5-4v8z"/></g></svg>
<svg style="left:46px;top:978px;" width="27" height="24" viewBox="0 0 27 24"><rect x="7.5" y="7.5" width="3" height="9" rx="1" fill="#58c030"/><path d="M12.6 12L19.6 8v8z" fill="#e4e4e4"/></svg>
<svg style="left:73px;top:978px;" width="27" height="24" viewBox="0 0 27 24"><path d="M8.5 12L19 6.5v11z" fill="#e4e4e4"/></svg>
<svg style="left:100px;top:978px;" width="27" height="24" viewBox="0 0 27 24"><rect x="7.5" y="6" width="12" height="12" fill="#e6e6e6" stroke="#8a6820" stroke-width="1"/></svg>
<svg style="left:127px;top:978px;" width="27" height="24" viewBox="0 0 27 24"><path d="M19 12L8.5 6.5v11z" fill="#e4e4e4"/></svg>
<svg style="left:154px;top:978px;" width="27" height="24" viewBox="0 0 27 24"><path d="M15 12L8 8v8z" fill="#e4e4e4"/><rect x="16.4" y="7.5" width="3" height="9" rx="1" fill="#58c030"/></svg>
<div style="left:192.5px;top:982.5px;width:49.0px;height:18.5px;background:#131313;border:1px solid #2a2a2a;border-top-color:#0a0a0a;border-left-color:#0a0a0a;"></div>
<span style="left:195.50px;top:985.98px;font-size:10.62px;line-height:13px;color:#eeeeee;white-space:pre;transform-origin:0 50%;transform:scaleX(1.1864);">60</span>
<div style="left:242px;top:982px;width:17px;height:19.5px;background:linear-gradient(#505050,#3e3e3e);border:1px solid #1c1c1c;"></div>
<div style="left:259px;top:982px;width:17px;height:19.5px;background:linear-gradient(#505050,#3e3e3e);border:1px solid #1c1c1c;"></div>
<svg style="left:247px;top:990px;" width="7" height="3" viewBox="0 0 7 3"><rect width="7" height="2" y="0.5" fill="#bbb"/></svg>
<svg style="left:264px;top:988px;" width="7" height="7" viewBox="0 0 7 7"><path d="M3.5 0v7M0 3.5h7" stroke="#ccc" stroke-width="1.8"/></svg>
<div style="left:287px;top:982.5px;width:40px;height:18.5px;background:#131313;border:1px solid #2a2a2a;border-top-color:#0a0a0a;border-left-color:#0a0a0a;"></div>
<span style="left:290.00px;top:985.98px;font-size:10.62px;line-height:13px;color:#eeeeee;white-space:pre;">1</span>
<div style="left:331px;top:971px;width:1409.5px;height:31.5px;background:#2b2b2b;border:1px solid #cfcfcf;border-bottom:0;"></div>
<div style="left:332px;top:1002px;width:1407.5px;height:1px;background:#383838;"></div>
<svg style="left:331px;top:971px;" width="1409" height="32" viewBox="0 0 1409 32"><rect x="1" y="15" width="1407" height="1" fill="#b4b4b4"/><rect x="17" y="12" width="1" height="7" fill="#d8d8d8"/><rect x="32" y="12" width="1" height="7" fill="#d8d8d8"/><rect x="48" y="12" width="1" height="7" fill="#d8d8d8"/><rect x="64" y="12" width="1" height="7" fill="#d8d8d8"/><rect x="79" y="12" width="1" height="7" fill="#d8d8d8"/><rect x="95" y="12" width="1" height="7" fill="#d8d8d8"/><rect x="110" y="12" width="1" height="7" fill="#d8d8d8"/><rect x="126" y="12" width="1" height="7" fill="#d8d8d8"/><rect x="142" y="12" width="1" height="7" fill="#d8d8d8"/><rect x="157" y="12" width="1" height="7" fill="#d8d8d8"/><rect x="173" y="11" width="1" height="9" fill="#d8d8d8"/><rect x="189" y="12" width="1" height="7" fill="#d8d8d8"/><rect x="204" y="12" width="1" height="7" fill="#d8d8d8"/><rect x="220" y="12" width="1" height="7" fill="#d8d8d8"/><rect x="235" y="12" width="1" height="7" fill="#d8d8d8"/><rect x="251" y="12" width="1" height="7" fill="#d8d8d8"/><rect x="267" y="12" width="1" height="7" fill="#d8d8d8"/><rect x="282" y="12" width="1" height="7" fill="#d8d8d8"/><rect x="298" y="12" width="1" height="7" fill="#d8d8d8"/><rect x="314" y="12" width="1" height="7" fill="#d8d8d8"/><rect x="329" y="12" width="1" height="7" fill="#d8d8d8"/><rect x="345" y="12" width="1" height="7" fill="#d8d8d8"/><rect x="361" y="11" width="1" height="9" fill="#d8d8d8"/><rect x="376" y="12" width="1" height="7" fill="#d8d8d8"/><rect x="392" y="12" width="1" height="7" fill="#d8d8d8"/><rect x="407" y="12" width="1" height="7" fill="#d8d8d8"/><rect x="423" y="12" width="1" height="7" fill="#d8d8d8"/><rect x="439" y="12" width="1" height="7" fill="#d8d8d8"/><rect x="454" y="12" width="1" height="7" fill="#d8d8d8"/><rect x="470" y="12" width="1" height="7" fill="#d8d8d8"/><rect x="486" y="12" width="1" height="7" fill="#d8d8d8"/><rect x="501" y="12" width="1" height="7" fill="#d8d8d8"/><rect x="517" y="12" width="1" height="7" fill="#d8d8d8"/><rect x="532" y="12" width="1" height="7" fill="#d8d8d8"/><rect x="548" y="11" width="1" height="9" fill="#d8d8d8"/><rect x="564" y="12" width="1" height="7" fill="#d8d8d8"/><rect x="579" y="12" width="1" height="7" fill="#d8d8d8"/><rect x="595" y="12" width="1" height="7" fill="#d8d8d8"/><rect x="611" y="12" width="1" height="7" fill="#d8d8d8"/><rect x="626" y="12" width="1" height="7" fill="#d8d8d8"/><rect x="642" y="12" width="1" height="7" fill="#d8d8d8"/><rect x="658" y="12" width="1" height="7" fill="#d8d8d8"/><rect x="673" y="12" width="1" height="7" fill="#d8d8d8"/><rect x="689" y="12" width="1" height="7" fill="#d8d8d8"/><rect x="704" y="12" width="1" height="7" fill="#d8d8d8"/><rect x="720" y="12" width="1" height="7" fill="#d8d8d8"/><rect x="736" y="11" width="1" height="9" fill="#d8d8d8"/><rect x="751" y="12" width="1" height="7" fill="#d8d8d8"/><rect x="767" y="12" width="1" height="7" fill="#d8d8d8"/><rect x="783" y="12" width="1" height="7" fill="#d8d8d8"/><rect x="798" y="12" width="1" height="7" fill="#d8d8d8"/><rect x="814" y="12" width="1" height="7" fill="#d8d8d8"/><rect x="829" y="12" width="1" height="7" fill="#d8d8d8"/><rect x="845" y="12" width="1" height="7" fill="#d8d8d8"/><rect x="861" y="12" width="1" height="7" fill="#d8d8d8"/><rect x="876" y="12" width="1" height="7" fill="#d8d8d8"/><rect x="892" y="12" width="1" height="7" fill="#d8d8d8"/><rect x="908" y="12" width="1" height="7" fill="#d8d8d8"/><rect x="923" y="11" width="1" height="9" fill="#d8d8d8"/><rect x="939" y="12" width="1" height="7" fill="#d8d8d8"/><rect x="955" y="12" width="1" height="7" fill="#d8d8d8"/><rect x="970" y="12" width="1" height="7" fill="#d8d8d8"/><rect x="986" y="12" width="1" height="7" fill="#d8d8d8"/><rect x="1001" y="12" width="1" height="7" fill="#d8d8d8"/><rect x="1017" y="12" width="1" height="7" fill="#d8d8d8"/><rect x="1033" y="12" width="1" height="7" fill="#d8d8d8"/><rect x="1048" y="12" width="1" height="7" fill="#d8d8d8"/><rect x="1064" y="12" width="1" height="7" fill="#d8d8d8"/><rect x="1080" y="12" width="1" height="7" fill="#d8d8d8"/><rect x="1095" y="12" width="1" height="7" fill="#d8d8d8"/><rect x="1111" y="11" width="1" height="9" fill="#d8d8d8"/><rect x="1127" y="12" width="1" height="7" fill="#d8d8d8"/><rect x="1142" y="12" width="1" height="7" fill="#d8d8d8"/><rect x="1158" y="12" width="1" height="7" fill="#d8d8d8"/><rect x="1173" y="12" width="1" height="7" fill="#d8d8d8"/><rect x="1189" y="12" width="1" height="7" fill="#d8d8d8"/><rect x="1205" y="12" width="1" height="7" fill="#d8d8d8"/><rect x="1220" y="12" width="1" height="7" fill="#d8d8d8"/><rect x="1236" y="12" width="1" height="7" fill="#d8d8d8"/><rect x="1252" y="12" width="1" height="7" fill="#d8d8d8"/><rect x="1267" y="12" width="1" height="7" fill="#d8d8d8"/><rect x="1283" y="12" width="1" height="7" fill="#d8d8d8"/><rect x="1298" y="11" width="1" height="9" fill="#d8d8d8"/><rect x="1314" y="12" width="1" height="7" fill="#d8d8d8"/><rect x="1330" y="12" width="1" height="7" fill="#d8d8d8"/><rect x="1345" y="12" width="1" height="7" fill="#d8d8d8"/><rect x="1361" y="12" width="1" height="7" fill="#d8d8d8"/><rect x="1377" y="12" width="1" height="7" fill="#d8d8d8"/><rect x="1392" y="12" width="1" height="7" fill="#d8d8d8"/></svg>
<span style="left:335.00px;top:972.88px;font-size:8.41px;line-height:10px;color:#d0d0d0;white-space:pre;">1</span>
<span style="left:506.15px;top:972.88px;font-size:8.41px;line-height:10px;color:#d0d0d0;white-space:pre;transform-origin:0 50%;transform:scaleX(1.1765);">12</span>
<span style="left:693.74px;top:972.88px;font-size:8.41px;line-height:10px;color:#d0d0d0;white-space:pre;transform-origin:0 50%;transform:scaleX(1.1765);">24</span>
<span style="left:881.32px;top:972.88px;font-size:8.41px;line-height:10px;color:#d0d0d0;white-space:pre;transform-origin:0 50%;transform:scaleX(1.1765);">36</span>
<span style="left:1068.90px;top:972.88px;font-size:8.41px;line-height:10px;color:#d0d0d0;white-space:pre;transform-origin:0 50%;transform:scaleX(1.1765);">48</span>
<span style="left:1444.07px;top:972.88px;font-size:8.41px;line-height:10px;color:#d0d0d0;white-space:pre;transform-origin:0 50%;transform:scaleX(1.1765);">72</span>
<span style="left:1631.66px;top:972.88px;font-size:8.41px;line-height:10px;color:#d0d0d0;white-space:pre;transform-origin:0 50%;transform:scaleX(1.1765);">84</span>
<div style="left:1242.788px;top:972.3px;width:23px;height:17.7px;background:#0c0c0c;border:1.3px solid #f4f4f4;"></div>
<span style="left:1247.29px;top:975.00px;font-size:11.06px;line-height:13px;color:#ffffff;white-space:pre;transform-origin:0 50%;transform:scaleX(1.1394);">60</span>
<div style="left:1253.288px;top:990px;width:2px;height:12.5px;background:#0a0a0a;"></div>
<div style="left:331px;top:1002.5px;width:1409px;height:8px;background:#383838;"></div>
<div style="left:331px;top:1003.5px;width:520px;height:6.5px;background:#3c3c3c;border:1px solid #1c1c1c;border-radius:2px;"></div>
<div style="left:331px;top:1003.5px;width:19px;height:6.5px;background:#464646;border:1px solid #1c1c1c;"></div>
<div style="left:835px;top:1003.5px;width:19px;height:6.5px;background:#464646;border:1px solid #1c1c1c;"></div>
<svg style="left:337.5px;top:1006px;" width="6" height="2" viewBox="0 0 6 2"><rect x="0" y="0" width="1.2" height="1.2" fill="#ccc"/><rect x="2.4" y="0" width="1.2" height="1.2" fill="#ccc"/><rect x="4.8" y="0" width="1.2" height="1.2" fill="#ccc"/></svg>
<svg style="left:592px;top:1006px;" width="6" height="2" viewBox="0 0 6 2"><rect x="0" y="0" width="1.2" height="1.2" fill="#ccc"/><rect x="2.4" y="0" width="1.2" height="1.2" fill="#ccc"/><rect x="4.8" y="0" width="1.2" height="1.2" fill="#ccc"/></svg>
<svg style="left:843px;top:1006px;" width="6" height="2" viewBox="0 0 6 2"><rect x="0" y="0" width="1.2" height="1.2" fill="#ccc"/><rect x="2.4" y="0" width="1.2" height="1.2" fill="#ccc"/><rect x="4.8" y="0" width="1.2" height="1.2" fill="#ccc"/></svg>
<div style="left:1745px;top:982.5px;width:40px;height:18.5px;background:#131313;border:1px solid #2a2a2a;border-top-color:#0a0a0a;border-left-color:#0a0a0a;"></div>
<span style="left:1748.00px;top:985.98px;font-size:10.62px;line-height:13px;color:#eeeeee;white-space:pre;transform-origin:0 50%;transform:scaleX(1.1864);">90</span>
<div style="left:1797px;top:980px;width:21px;height:21.5px;background:linear-gradient(#4c4c4c,#3a3a3a);border:1px solid #1c1c1c;"></div>
<svg style="left:1799px;top:982px;" width="17" height="17" viewBox="0 0 17 17"><circle cx="5" cy="5" r="3.3" fill="none" stroke="#e6e6e6" stroke-width="1.8"/><path d="M7.4 7.4L14 14M11 11l2-2M13 13l2-2" stroke="#e6e6e6" stroke-width="1.7"/></svg>
<div style="left:1824.5px;top:980px;width:21px;height:21.5px;background:linear-gradient(#4c4c4c,#3a3a3a);border:1px solid #1c1c1c;"></div>
<div style="left:1845.5px;top:980px;width:21px;height:21.5px;background:linear-gradient(#4c4c4c,#3a3a3a);border:1px solid #1c1c1c;"></div>
<div style="left:1866.5px;top:980px;width:21px;height:21.5px;background:linear-gradient(#4c4c4c,#3a3a3a);border:1px solid #1c1c1c;"></div>
<div style="left:1887.5px;top:980px;width:21px;height:21.5px;background:linear-gradient(#4c4c4c,#3a3a3a);border:1px solid #1c1c1c;"></div>
<svg style="left:1827px;top:982.5px;" width="16" height="16" viewBox="0 0 16 16"><circle cx="8" cy="8" r="6.2" fill="none" stroke="#e6e6e6" stroke-width="1.4"/><path d="M8 4.4V8h3" stroke="#e6e6e6" stroke-width="1.4" fill="none"/><circle cx="8" cy="8" r="1.2" fill="#e6e6e6"/></svg>
<svg style="left:1848px;top:983px;" width="17" height="16" viewBox="0 0 17 16"><path d="M2 10.5h11a3.2 3.2 0 0 0 0-6.4H5" fill="none" stroke="#e6e6e6" stroke-width="1.5"/><path d="M6.5 1.2L2.8 4.2l3.7 3z" fill="#e6e6e6"/><path d="M8 12.5h6l-3 3.5z" fill="#999"/></svg>
<svg style="left:1869px;top:982.5px;" width="17" height="17" viewBox="0 0 17 17"><path d="M2 6h3l4-3.6v12L5 11H2z" fill="#d0d0d0"/><path d="M11 4.4a5.6 5.6 0 0 1 0 8.2M13.4 2.4a8.4 8.4 0 0 1 0 12.2" fill="none" stroke="#e0e0e0" stroke-width="1.2"/></svg>
<svg style="left:1890px;top:983px;" width="17" height="16" viewBox="0 0 17 16"><rect x="2" y="1.5" width="10" height="9" fill="#e6e6e6"/><rect x="2" y="1.5" width="10" height="2.2" fill="#9a9a9a"/><path d="M9 7l6.5 3.6-3 .6 1.6 3-1.4.7-1.6-3L9 14z" fill="#f4f4f4" stroke="#333" stroke-width="0.6"/></svg>
<div style="left:0px;top:1013px;width:1916px;height:25px;background:#1e1e1e;"></div>
<div style="left:1748px;top:1013.5px;width:24px;height:24px;background:linear-gradient(#464646,#3a3a3a);border-right:1px solid #2a2a2a;"></div>
<div style="left:1772px;top:1013.5px;width:24px;height:24px;background:linear-gradient(#464646,#3a3a3a);border-right:1px solid #2a2a2a;"></div>
<div style="left:1796px;top:1013.5px;width:98px;height:24px;background:linear-gradient(#484848,#3c3c3c);"></div>
<div style="left:1894px;top:1013.5px;width:22px;height:24px;background:linear-gradient(#3e3e3e,#343434);"></div>
<svg style="left:1751px;top:1016px;" width="21" height="20" viewBox="0 0 21 20"><path d="M2 9Q2 3 9 2.4Q16 2 17 8Q17.5 12 13.5 13L12 17l-2.5-3.2Q2 14 2 9Z" fill="#9a9a9a"/><path d="M5 8Q7 5 10 7M9 10q3-2 5 0M6 11q2-1 3 1" stroke="#6a6a6a" stroke-width="1" fill="none"/><path d="M15.5 12.5v7l4-3.5z" fill="#888"/></svg>
<svg style="left:1775.5px;top:1017px;" width="17" height="17" viewBox="0 0 17 17"><path d="M2.5 7.5A6.2 6.2 0 0 1 13.6 5" fill="none" stroke="#8e8e8e" stroke-width="2.2"/><path d="M15.6 1.6v5.4h-5.4z" fill="#8e8e8e"/><path d="M14.5 9.5A6.2 6.2 0 0 1 3.4 12" fill="none" stroke="#8e8e8e" stroke-width="2.2"/><path d="M1.4 15.4V10h5.4z" fill="#8e8e8e"/></svg>
<span style="left:1808.00px;top:1019.00px;font-size:11.06px;line-height:13px;color:#cccccc;white-space:pre;transform-origin:0 50%;transform:scaleX(1.0746);">Auto Update</span>
<svg style="left:1902px;top:1017px;" width="8" height="17" viewBox="0 0 8 17"><path d="M0 6.5L4 0L8 6.5z M0 10L4 16.5L8 10z" fill="#777"/></svg>
<div style="left:0px;top:1038px;width:1916px;height:46px;background:#000000;"></div>
<div style="left:47px;top:1038.5px;width:344px;height:40.5px;background:#3a3a3a;"></div>
<span style="left:59.25px;top:1050.00px;font-size:16px;line-height:19px;color:#a8a8a8;white-space:pre;transform-origin:0 50%;transform:scaleX(0.9059);">Search Windows</span>
<svg style="left:15px;top:1051px;" width="16" height="16" viewBox="0 0 16 16"><g fill="#ffffff"><path d="M0 2.2L6.6 1.3V7.6H0zM7.4 1.2L16 0V7.6H7.4zM0 8.4H6.6V14.7L0 13.8zM7.4 8.4H16V16L7.4 14.8z"/></g></svg>
<svg style="left:405px;top:1051.5px;" width="20" height="17" viewBox="0 0 20 17"><rect x="4" y="1" width="12" height="14" fill="none" stroke="#fff" stroke-width="1.4"/><path d="M2.5 3.5H0.8v9h1.7M17.5 3.5h1.7v9h-1.7" fill="none" stroke="#fff" stroke-width="1.2"/></svg>
<svg style="left:455.5px;top:1047px;" width="18" height="23" viewBox="0 0 18 23"><path d="M1 0h11l5 5v18H1z" fill="#dfe9fb"/><path d="M12 0v5h5z" fill="#9db4e0"/><path d="M1 0h11l5 5v18H1z" fill="none" stroke="#b8c8ea" stroke-width="0.6"/></svg>
<svg style="left:502.5px;top:1048px;" width="24" height="21" viewBox="0 0 24 21"><path d="M0 2h8l2 2.4h12V19H0z" fill="#e8b64c"/><path d="M0 6h22v13H0z" fill="#f6d67a"/><path d="M5.5 12h11v7h-11z" fill="#3c9ae0"/><path d="M8.5 15h5v4h-5z" fill="#f6d67a"/></svg>
<div style="left:493.79999999999995px;top:1077px;width:40px;height:2px;background:#76b9ed;"></div>
<svg style="left:552px;top:1046px;" width="23" height="25" viewBox="0 0 23 25"><rect x="10" y="1" width="11" height="9" fill="#3050c0" stroke="#d8d8d8" stroke-width="1.2"/><rect x="1" y="12" width="11" height="9" fill="#3050c0" stroke="#d8d8d8" stroke-width="1.2"/><path d="M13 4l-5 8h4l-3 8 8-10h-4l3-6z" fill="#f4e020" stroke="#8a7a00" stroke-width="0.5"/><rect x="0" y="22" width="13" height="2" fill="#aaa"/></svg>
<svg style="left:600px;top:1047px;" width="23" height="23" viewBox="0 0 24 24"><circle cx="12" cy="12" r="11.5" fill="#e33b2e"/><path d="M12 12L2.2 6A11.5 11.5 0 0 0 6.6 22.2Z" fill="#2da94f"/><path d="M12 12L6.6 22.2A11.5 11.5 0 0 0 23.4 10.6L12 12Z" fill="#fdd23a"/><path d="M12 0.5A11.5 11.5 0 0 1 23.4 10.6L12 12Z" fill="#e33b2e"/><circle cx="12" cy="12" r="5.4" fill="#fff"/><circle cx="12" cy="12" r="4.2" fill="#4a8af4"/></svg>
<div style="left:591.7px;top:1077px;width:40px;height:2px;background:#76b9ed;"></div>
<svg style="left:648.5px;top:1046px;" width="27" height="27" viewBox="0 0 27 27"><circle cx="12" cy="12" r="11.5" fill="#1ed760"/><g fill="none" stroke="#0a0a0a" stroke-linecap="round"><path d="M5.5 8.6Q12 6.6 18.6 9.8" stroke-width="2.2"/><path d="M6.4 12.4Q12 10.8 17.4 13.4" stroke-width="1.8"/><path d="M7.2 15.8Q12 14.6 16.2 16.6" stroke-width="1.5"/></g><circle cx="20" cy="20" r="6" fill="#4a8fe2"/><text x="20" y="23.4" font-size="9" font-weight="bold" fill="#fff" text-anchor="middle" font-family="Liberation Sans">2</text></svg>
<div style="left:641.0px;top:1077px;width:40px;height:2px;background:#76b9ed;"></div>
<svg style="left:697px;top:1049px;" width="27" height="20" viewBox="0 0 27 20"><path d="M2 12Q1 7 8 6L20 3.4Q25 3 24.5 8Q24 13 18 14L7 16.6Q3 17 2 12Z" fill="#2f7fc0"/><path d="M6 11.6Q6 9.4 9 9L18 7.4Q20 7.2 19.8 9Q19.6 10.6 17 11L9 12.6Q6.4 13 6 11.600Z" fill="#e8f0f8"/><circle cx="20" cy="5" r="3" fill="#d8e6f4"/></svg>
<div style="left:735px;top:1039px;width:44px;height:40px;background:#343434;"></div>
<div style="left:779px;top:1039px;width:4px;height:40px;background:#262626;"></div>
<svg style="left:746.7px;top:1046.7px;" width="24.5" height="24.3" viewBox="0 0 24.5 24.3"><defs><clipPath id="cpH"><rect width="24.5" height="24.3"/></clipPath></defs><rect width="24.5" height="24.3" fill="#ff4d05"/><path clip-path="url(#cpH)" d="M15.2 24.5L16.3 23.4L17.1 22.1L17.8 20.8L18.3 19.4L18.5 18.0L18.6 16.6L18.5 15.1L18.3 13.7L17.8 12.3L17.2 11.1L16.4 9.9L15.5 8.8L14.4 7.9L13.1 7.1L11.8 6.5L10.4 6.1L9.0 5.9L7.6 6.0L6.2 6.5L5.0 7.0L3.8 7.8L2.8 8.7L2.0 9.7L1.3 10.7L0.8 11.9L0.5 13.0L0.4 14.2L0.4 15.4L0.5 16.5L0.8 17.5L1.2 18.5L1.7 19.4L2.3 20.2L3.0 21.0L3.8 21.5L4.7 22.0L5.6 22.3L6.5 22.5L7.4 22.6L8.3 22.5L9.2 22.5L10.1 22.3L10.9 22.1L11.7 21.7L12.5 21.2L13.2 20.6L13.8 19.9L14.3 19.1L14.7 18.3L14.9 17.4L15.1 16.4L15.0 15.5L14.7 14.6L14.3 13.8L13.8 13.0L13.3 12.3L12.6 11.7L11.9 11.3L11.1 10.9L10.3 10.7L9.5 10.6L8.7 10.6L7.9 10.7L7.2 11.0L6.6 11.5L6.0 11.9L5.6 12.5L5.3 13.1L5.0 13.6L4.9 14.2L4.9 14.8L4.9 15.4L5.1 15.9L5.2 16.3L5.3 16.7L5.4 17.1L5.6 17.5L5.9 17.8L6.1 18.1L6.5 18.4L6.8 18.6L7.2 18.8L7.5 18.9L7.9 18.9L8.3 18.9L8.7 18.9L9.1 18.9L9.4 18.8L9.8 18.6L10.1 18.4L10.5 18.1L10.7 17.8L11.0 17.5" fill="none" stroke="#38322f" stroke-width="2.7" stroke-linejoin="round" stroke-linecap="round"/></svg>
<div style="left:734.8px;top:1077px;width:48px;height:2px;background:#76b9ed;"></div>
<svg style="left:795.5px;top:1047px;" width="24" height="24" viewBox="0 0 24 24"><defs><linearGradient id="gMaya" x1="0" y1="0" x2="1" y2="1"><stop offset="0" stop-color="#d8f6f6"/><stop offset="1" stop-color="#46c6c8"/></linearGradient></defs><rect width="24" height="24" fill="url(#gMaya)"/><path d="M2.500 19V8.500L7.500 4l4.500 8 4.500-8 5 4.500V19l-3.500-1V11l-6 7-6-7v7z" fill="#16a0a6"/><path d="M7.500 4l4.500 8v6l-6-7z" fill="#2cc0c2"/><path d="M16.500 4L12 12v6l6-7z" fill="#0e8088"/><rect x="0" y="19" width="24" height="5" fill="#c8ecec"/><rect x="10" y="19.200" width="13.500" height="4.600" fill="#f2f8f8"/><text x="16.800" y="23.300" font-size="4.800" font-weight="bold" fill="#222" text-anchor="middle" font-family="Liberation Sans" textLength="11.500" lengthAdjust="spacingAndGlyphs">MAYA</text></svg>
<svg style="left:844.5px;top:1047px;" width="24" height="24" viewBox="0 0 24 24"><defs><linearGradient id="gMaya" x1="0" y1="0" x2="1" y2="1"><stop offset="0" stop-color="#d8f6f6"/><stop offset="1" stop-color="#46c6c8"/></linearGradient></defs><rect width="24" height="24" fill="url(#gMaya)"/><path d="M2.500 19V8.500L7.500 4l4.500 8 4.500-8 5 4.500V19l-3.500-1V11l-6 7-6-7v7z" fill="#16a0a6"/><path d="M7.500 4l4.500 8v6l-6-7z" fill="#2cc0c2"/><path d="M16.500 4L12 12v6l6-7z" fill="#0e8088"/><rect x="0" y="19" width="24" height="5" fill="#c8ecec"/><rect x="10" y="19.200" width="13.500" height="4.600" fill="#f2f8f8"/><text x="16.800" y="23.300" font-size="4.800" font-weight="bold" fill="#222" text-anchor="middle" font-family="Liberation Sans" textLength="11.500" lengthAdjust="spacingAndGlyphs">MAYA</text></svg>
<svg style="left:894px;top:1047px;" width="25" height="25" viewBox="0 0 25 25"><circle cx="12" cy="12" r="11" fill="#4a0d16" stroke="#a8283a" stroke-width="1.6"/><path d="M12 12L5 3.5M12 12L21 7M12 12L9 22.5M12 12l8.500 6" stroke="#c0344a" stroke-width="1.6"/><circle cx="12" cy="12" r="3" fill="#a8283a"/><circle cx="19.500" cy="19" r="4.200" fill="#2a0a0e" stroke="#c0344a" stroke-width="1.200"/><path d="M17.500 17l4 4M21.500 17l-4 4" stroke="#c0344a" stroke-width="1.100"/></svg>
<div style="left:885.9px;top:1077px;width:40px;height:2px;background:#76b9ed;"></div>
<svg style="left:943px;top:1046.5px;" width="24" height="24" viewBox="0 0 24 24"><circle cx="12" cy="12" r="11.5" fill="#1a3a6a"/><circle cx="12" cy="12" r="11.5" fill="url(#gSteam)"/><circle cx="15.500" cy="9" r="4.200" fill="none" stroke="#e8eef6" stroke-width="1.800"/><circle cx="15.500" cy="9" r="1.800" fill="#e8eef6"/><path d="M1.500 13.500L9 16.600" stroke="#e8eef6" stroke-width="3.400" stroke-linecap="round"/><circle cx="8.600" cy="16.800" r="2.800" fill="#1a3a6a" stroke="#e8eef6" stroke-width="1.400"/></svg>
<div style="left:934.9px;top:1077px;width:40px;height:2px;background:#76b9ed;"></div>
<svg style="left:991px;top:1046px;" width="26" height="25" viewBox="0 0 26 25"><rect x="7" y="1" width="18" height="14" fill="#d8d8d8" stroke="#888" stroke-width="0.6"/><rect x="4" y="4" width="18" height="14" fill="#e8e8e8" stroke="#888" stroke-width="0.6"/><rect x="1" y="7" width="18" height="15" fill="#f4f4f4" stroke="#888" stroke-width="0.6"/><circle cx="10" cy="15.500" r="5.400" fill="#e33b2e"/><path d="M10 15.500L5.400 12.700A5.400 5.400 0 0 0 7.500 20.300Z" fill="#2da94f"/><path d="M10 15.500L7.500 20.300A5.400 5.400 0 0 0 15.400 14.800Z" fill="#fdd23a"/><circle cx="10" cy="15.500" r="2.300" fill="#4a8af4" stroke="#fff" stroke-width="0.800"/></svg>
<div style="left:983.8px;top:1077px;width:40px;height:2px;background:#76b9ed;"></div>
<svg style="left:1729.5px;top:1054px;" width="13" height="8" viewBox="0 0 13 8"><path d="M0.800 7.200L6.500 1.200L12.200 7.200" fill="none" stroke="#fff" stroke-width="1.400"/></svg>
<svg style="left:1752px;top:1051px;" width="17" height="17" viewBox="0 0 17 17"><g fill="#f2f2f2"><path d="M4.500 0L8 2.400L4.500 4.800L1 2.400zM11.500 0L15 2.400L11.500 4.800L8 2.400zM4.500 5L8 7.400L4.500 9.800L1 7.400zM11.500 5L15 7.400L11.500 9.800L8 7.400zM8 8.200l3.200 2.300L8 12.800l-3.200-2.300z"/></g><circle cx="12.500" cy="13" r="3.800" fill="#2eb84a"/><path d="M10.600 13l1.400 1.500 2.600-2.900" stroke="#fff" stroke-width="1.100" fill="none"/></svg>
<svg style="left:1775.5px;top:1051px;" width="18" height="16" viewBox="0 0 18 16"><rect x="3.500" y="0.700" width="13.500" height="10" fill="none" stroke="#fff" stroke-width="1.300"/><rect x="0.600" y="2.600" width="5" height="4" fill="#000" stroke="#fff" stroke-width="1.100"/><path d="M3 6.600v3.600M10 10.700v3.600M6 14.800h8" stroke="#fff" stroke-width="1.300"/></svg>
<svg style="left:1799.5px;top:1050px;" width="18" height="17" viewBox="0 0 18 17"><path d="M1 6h3l4-3.800v12.600L4 11H1z" fill="none" stroke="#fff" stroke-width="1.200"/><path d="M10.500 5.600a4 4 0 0 1 0 5.800M12.800 3.400a7.200 7.200 0 0 1 0 10.200M15 1.400a10 10 0 0 1 0 14.200" fill="none" stroke="#fff" stroke-width="1.100"/></svg>
<svg style="left:1824px;top:1050px;" width="17" height="17" viewBox="0 0 17 17"><path d="M0.700 0.700h14.600v10H7l-3 0H0.700z" fill="#fff"/><path d="M3 3.400h10M3 5.800h10M3 8.200h6" stroke="#000" stroke-width="1"/><circle cx="12.200" cy="12.200" r="4" fill="#000" stroke="#fff" stroke-width="1.200"/><path d="M10.200 12.200h4" stroke="#fff" stroke-width="1.200"/></svg>
<span style="left:1854.50px;top:1043.00px;font-size:12px;line-height:14px;color:#ffffff;white-space:pre;transform-origin:0 50%;transform:scaleX(0.9637);">11:28 AM</span>
<span style="left:1856.50px;top:1059.50px;font-size:12px;line-height:14px;color:#ffffff;white-space:pre;transform-origin:0 50%;transform:scaleX(0.9741);">3/6/2016</span>
</div></body></html>
